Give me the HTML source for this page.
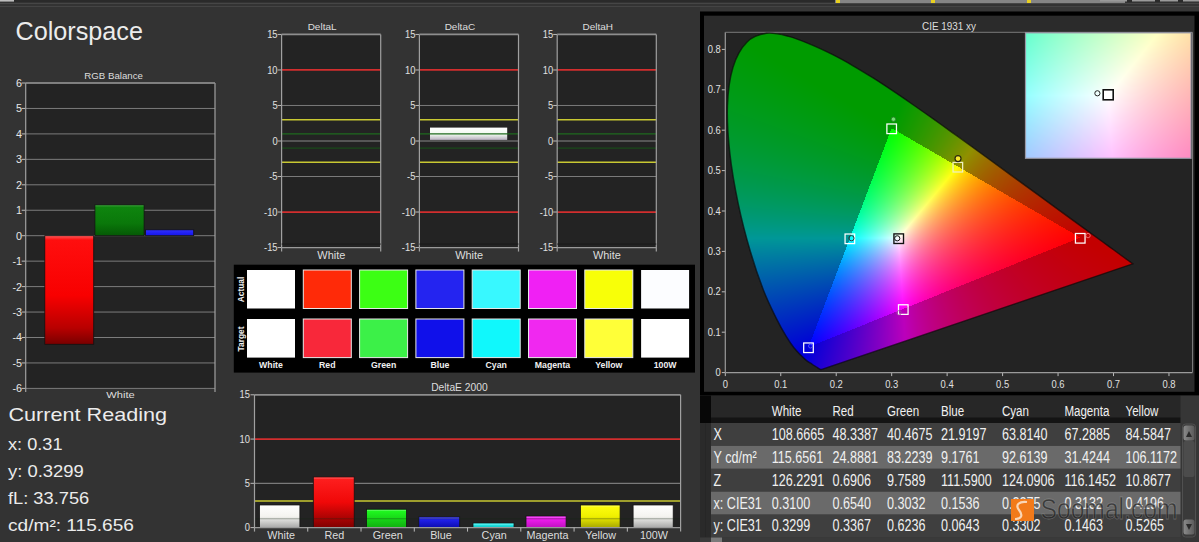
<!DOCTYPE html>
<html><head><meta charset="utf-8"><title>Colorspace</title>
<style>
html,body{margin:0;padding:0;background:#333333;}
body{width:1199px;height:542px;overflow:hidden;position:relative;font-family:"Liberation Sans",sans-serif;}
svg{position:absolute;left:0;top:0;}
svg text{font-family:"Liberation Sans",sans-serif;}
#cie{position:absolute;left:725px;top:32px;}
#ins{position:absolute;left:1026px;top:33px;}
</style></head><body>
<svg width="1199" height="542" viewBox="0 0 1199 542">
<rect x="0.00" y="0.00" width="1199.00" height="2.00" fill="#2a2a2a"/>
<rect x="0.00" y="0.00" width="14.00" height="1.60" fill="#bdbdbd"/>
<line x1="0.00" y1="3.50" x2="1199.00" y2="3.50" stroke="#464646" stroke-width="1"/>
<line x1="0.00" y1="6.50" x2="1199.00" y2="6.50" stroke="#444444" stroke-width="1"/>
<rect x="700.00" y="7.00" width="499.00" height="4.50" fill="#373737"/>
<rect x="835.00" y="0.00" width="290.00" height="3.00" fill="#858585"/>
<rect x="836.00" y="0.00" width="4.00" height="3.00" fill="#e8d020"/>
<rect x="931.00" y="0.00" width="4.00" height="3.00" fill="#e8d020"/>
<rect x="1027.00" y="0.00" width="4.00" height="3.00" fill="#e8d020"/>
<rect x="1100.00" y="0.00" width="27.00" height="1.50" fill="#9a9a9a"/>
<rect x="1132.00" y="0.00" width="23.00" height="1.50" fill="#9a9a9a"/>
<rect x="1160.00" y="0.00" width="18.00" height="1.50" fill="#9a9a9a"/>
<rect x="1183.00" y="0.00" width="16.00" height="1.50" fill="#9a9a9a"/>
<text x="15.50" y="39.50" font-size="25.70" fill="#ececec" text-anchor="start" textLength="127.50" lengthAdjust="spacingAndGlyphs">Colorspace</text>
<rect x="25.70" y="83.00" width="189.30" height="305.40" fill="#232323"/>
<text x="113.60" y="78.60" font-size="8.80" fill="#dddddd" text-anchor="middle" textLength="58.50" lengthAdjust="spacingAndGlyphs">RGB Balance</text>
<line x1="25.70" y1="83.00" x2="215.00" y2="83.00" stroke="#7c7c7c" stroke-width="1"/>
<line x1="21.70" y1="83.00" x2="25.70" y2="83.00" stroke="#bbbbbb" stroke-width="1"/>
<text x="22.00" y="86.90" font-size="10.80" fill="#e6e6e6" text-anchor="end" textLength="6.01" lengthAdjust="spacingAndGlyphs">6</text>
<line x1="25.70" y1="108.45" x2="215.00" y2="108.45" stroke="#7c7c7c" stroke-width="1"/>
<line x1="21.70" y1="108.45" x2="25.70" y2="108.45" stroke="#bbbbbb" stroke-width="1"/>
<text x="22.00" y="112.35" font-size="10.80" fill="#e6e6e6" text-anchor="end" textLength="6.01" lengthAdjust="spacingAndGlyphs">5</text>
<line x1="25.70" y1="133.90" x2="215.00" y2="133.90" stroke="#7c7c7c" stroke-width="1"/>
<line x1="21.70" y1="133.90" x2="25.70" y2="133.90" stroke="#bbbbbb" stroke-width="1"/>
<text x="22.00" y="137.80" font-size="10.80" fill="#e6e6e6" text-anchor="end" textLength="6.01" lengthAdjust="spacingAndGlyphs">4</text>
<line x1="25.70" y1="159.35" x2="215.00" y2="159.35" stroke="#7c7c7c" stroke-width="1"/>
<line x1="21.70" y1="159.35" x2="25.70" y2="159.35" stroke="#bbbbbb" stroke-width="1"/>
<text x="22.00" y="163.25" font-size="10.80" fill="#e6e6e6" text-anchor="end" textLength="6.01" lengthAdjust="spacingAndGlyphs">3</text>
<line x1="25.70" y1="184.80" x2="215.00" y2="184.80" stroke="#7c7c7c" stroke-width="1"/>
<line x1="21.70" y1="184.80" x2="25.70" y2="184.80" stroke="#bbbbbb" stroke-width="1"/>
<text x="22.00" y="188.70" font-size="10.80" fill="#e6e6e6" text-anchor="end" textLength="6.01" lengthAdjust="spacingAndGlyphs">2</text>
<line x1="25.70" y1="210.25" x2="215.00" y2="210.25" stroke="#7c7c7c" stroke-width="1"/>
<line x1="21.70" y1="210.25" x2="25.70" y2="210.25" stroke="#bbbbbb" stroke-width="1"/>
<text x="22.00" y="214.15" font-size="10.80" fill="#e6e6e6" text-anchor="end" textLength="6.01" lengthAdjust="spacingAndGlyphs">1</text>
<line x1="25.70" y1="235.70" x2="215.00" y2="235.70" stroke="#7c7c7c" stroke-width="1"/>
<line x1="21.70" y1="235.70" x2="25.70" y2="235.70" stroke="#bbbbbb" stroke-width="1"/>
<text x="22.00" y="239.60" font-size="10.80" fill="#e6e6e6" text-anchor="end" textLength="6.01" lengthAdjust="spacingAndGlyphs">0</text>
<line x1="25.70" y1="261.15" x2="215.00" y2="261.15" stroke="#7c7c7c" stroke-width="1"/>
<line x1="21.70" y1="261.15" x2="25.70" y2="261.15" stroke="#bbbbbb" stroke-width="1"/>
<text x="22.00" y="265.05" font-size="10.80" fill="#e6e6e6" text-anchor="end" textLength="9.60" lengthAdjust="spacingAndGlyphs">-1</text>
<line x1="25.70" y1="286.60" x2="215.00" y2="286.60" stroke="#7c7c7c" stroke-width="1"/>
<line x1="21.70" y1="286.60" x2="25.70" y2="286.60" stroke="#bbbbbb" stroke-width="1"/>
<text x="22.00" y="290.50" font-size="10.80" fill="#e6e6e6" text-anchor="end" textLength="9.60" lengthAdjust="spacingAndGlyphs">-2</text>
<line x1="25.70" y1="312.05" x2="215.00" y2="312.05" stroke="#7c7c7c" stroke-width="1"/>
<line x1="21.70" y1="312.05" x2="25.70" y2="312.05" stroke="#bbbbbb" stroke-width="1"/>
<text x="22.00" y="315.95" font-size="10.80" fill="#e6e6e6" text-anchor="end" textLength="9.60" lengthAdjust="spacingAndGlyphs">-3</text>
<line x1="25.70" y1="337.50" x2="215.00" y2="337.50" stroke="#7c7c7c" stroke-width="1"/>
<line x1="21.70" y1="337.50" x2="25.70" y2="337.50" stroke="#bbbbbb" stroke-width="1"/>
<text x="22.00" y="341.40" font-size="10.80" fill="#e6e6e6" text-anchor="end" textLength="9.60" lengthAdjust="spacingAndGlyphs">-4</text>
<line x1="25.70" y1="362.95" x2="215.00" y2="362.95" stroke="#7c7c7c" stroke-width="1"/>
<line x1="21.70" y1="362.95" x2="25.70" y2="362.95" stroke="#bbbbbb" stroke-width="1"/>
<text x="22.00" y="366.85" font-size="10.80" fill="#e6e6e6" text-anchor="end" textLength="9.60" lengthAdjust="spacingAndGlyphs">-5</text>
<line x1="25.70" y1="388.40" x2="215.00" y2="388.40" stroke="#7c7c7c" stroke-width="1"/>
<line x1="21.70" y1="388.40" x2="25.70" y2="388.40" stroke="#bbbbbb" stroke-width="1"/>
<text x="22.00" y="392.30" font-size="10.80" fill="#e6e6e6" text-anchor="end" textLength="9.60" lengthAdjust="spacingAndGlyphs">-6</text>
<defs><linearGradient id="gR" x1="0" y1="0" x2="0" y2="1"><stop offset="0" stop-color="#ff5a5a"/><stop offset="0.04" stop-color="#ff0e0e"/><stop offset="0.55" stop-color="#f80000"/><stop offset="0.85" stop-color="#b80000"/><stop offset="1" stop-color="#780000"/></linearGradient><linearGradient id="gG" x1="0" y1="0" x2="0" y2="1"><stop offset="0" stop-color="#40a840"/><stop offset="0.08" stop-color="#0e840e"/><stop offset="0.6" stop-color="#0a780a"/><stop offset="1" stop-color="#055805"/></linearGradient><linearGradient id="gB" x1="0" y1="0" x2="0" y2="1"><stop offset="0" stop-color="#3030ff"/><stop offset="1" stop-color="#1414e8"/></linearGradient></defs>
<rect x="44.80" y="235.70" width="48.90" height="108.60" fill="url(#gR)" stroke="#121212" stroke-width="0.8"/>
<rect x="94.90" y="204.80" width="49.20" height="30.90" fill="url(#gG)" stroke="#121212" stroke-width="0.8"/>
<rect x="145.60" y="229.80" width="48.10" height="5.90" fill="url(#gB)" stroke="#121212" stroke-width="0.8"/>
<line x1="25.70" y1="83.00" x2="25.70" y2="391.90" stroke="#a0a0a0" stroke-width="1.2"/>
<line x1="215.00" y1="83.00" x2="215.00" y2="391.90" stroke="#a0a0a0" stroke-width="1.2"/>
<line x1="25.70" y1="83.00" x2="215.00" y2="83.00" stroke="#8e8e8e" stroke-width="1.3"/>
<text x="120.50" y="397.90" font-size="9.60" fill="#dddddd" text-anchor="middle" textLength="28.50" lengthAdjust="spacingAndGlyphs">White</text>
<text x="8.50" y="421.00" font-size="18.60" fill="#ececec" text-anchor="start" textLength="158.50" lengthAdjust="spacingAndGlyphs">Current Reading</text>
<text x="8.00" y="449.80" font-size="16.40" fill="#ececec" text-anchor="start" textLength="54.50" lengthAdjust="spacingAndGlyphs">x: 0.31</text>
<text x="8.00" y="476.70" font-size="16.40" fill="#ececec" text-anchor="start" textLength="75.80" lengthAdjust="spacingAndGlyphs">y: 0.3299</text>
<text x="8.00" y="503.50" font-size="16.40" fill="#ececec" text-anchor="start" textLength="81.20" lengthAdjust="spacingAndGlyphs">fL: 33.756</text>
<text x="8.00" y="530.50" font-size="16.40" fill="#ececec" text-anchor="start" textLength="126.00" lengthAdjust="spacingAndGlyphs">cd/m²: 115.656</text>
<rect x="281.60" y="34.45" width="99.10" height="213.09" fill="#232323"/>
<text x="322.10" y="30.20" font-size="9.80" fill="#dddddd" text-anchor="middle" textLength="28.89" lengthAdjust="spacingAndGlyphs">DeltaL</text>
<text x="277.60" y="38.05" font-size="10.20" fill="#e0e0e0" text-anchor="end" textLength="10.44" lengthAdjust="spacingAndGlyphs">15</text>
<line x1="277.60" y1="34.45" x2="281.60" y2="34.45" stroke="#bbbbbb" stroke-width="1"/>
<text x="277.60" y="73.57" font-size="10.20" fill="#e0e0e0" text-anchor="end" textLength="10.44" lengthAdjust="spacingAndGlyphs">10</text>
<line x1="277.60" y1="69.97" x2="281.60" y2="69.97" stroke="#bbbbbb" stroke-width="1"/>
<text x="277.60" y="109.08" font-size="10.20" fill="#e0e0e0" text-anchor="end" textLength="5.22" lengthAdjust="spacingAndGlyphs">5</text>
<line x1="277.60" y1="105.48" x2="281.60" y2="105.48" stroke="#bbbbbb" stroke-width="1"/>
<text x="277.60" y="144.60" font-size="10.20" fill="#e0e0e0" text-anchor="end" textLength="5.22" lengthAdjust="spacingAndGlyphs">0</text>
<line x1="277.60" y1="141.00" x2="281.60" y2="141.00" stroke="#bbbbbb" stroke-width="1"/>
<text x="277.60" y="180.11" font-size="10.20" fill="#e0e0e0" text-anchor="end" textLength="8.34" lengthAdjust="spacingAndGlyphs">-5</text>
<line x1="277.60" y1="176.51" x2="281.60" y2="176.51" stroke="#bbbbbb" stroke-width="1"/>
<text x="277.60" y="215.63" font-size="10.20" fill="#e0e0e0" text-anchor="end" textLength="13.56" lengthAdjust="spacingAndGlyphs">-10</text>
<line x1="277.60" y1="212.03" x2="281.60" y2="212.03" stroke="#bbbbbb" stroke-width="1"/>
<text x="277.60" y="251.15" font-size="10.20" fill="#e0e0e0" text-anchor="end" textLength="13.56" lengthAdjust="spacingAndGlyphs">-15</text>
<line x1="277.60" y1="247.55" x2="281.60" y2="247.55" stroke="#bbbbbb" stroke-width="1"/>
<line x1="281.60" y1="69.97" x2="380.70" y2="69.97" stroke="#d22e2e" stroke-width="1.8"/>
<line x1="281.60" y1="212.03" x2="380.70" y2="212.03" stroke="#d22e2e" stroke-width="1.8"/>
<line x1="281.60" y1="105.48" x2="380.70" y2="105.48" stroke="#7a7a7a" stroke-width="1"/>
<line x1="281.60" y1="176.51" x2="380.70" y2="176.51" stroke="#7a7a7a" stroke-width="1"/>
<line x1="281.60" y1="119.69" x2="380.70" y2="119.69" stroke="#c8c832" stroke-width="1.6"/>
<line x1="281.60" y1="162.31" x2="380.70" y2="162.31" stroke="#c8c832" stroke-width="1.6"/>
<line x1="281.60" y1="133.90" x2="380.70" y2="133.90" stroke="#1f6a1f" stroke-width="1.2"/>
<line x1="281.60" y1="148.10" x2="380.70" y2="148.10" stroke="#1a4a1a" stroke-width="1.2"/>
<line x1="281.60" y1="141.00" x2="380.70" y2="141.00" stroke="#8a8a8a" stroke-width="1.2"/>
<line x1="281.60" y1="34.45" x2="380.70" y2="34.45" stroke="#8e8e8e" stroke-width="1.8"/>
<line x1="281.60" y1="34.45" x2="281.60" y2="251.55" stroke="#a0a0a0" stroke-width="1.2"/>
<line x1="380.70" y1="34.45" x2="380.70" y2="251.55" stroke="#a0a0a0" stroke-width="1.2"/>
<line x1="281.60" y1="244.05" x2="380.70" y2="244.05" stroke="#1a1a1a" stroke-width="1"/>
<line x1="281.60" y1="247.55" x2="380.70" y2="247.55" stroke="#9a9a9a" stroke-width="1.2"/>
<text x="331.35" y="258.50" font-size="10.60" fill="#dddddd" text-anchor="middle" textLength="28.00" lengthAdjust="spacingAndGlyphs">White</text>
<rect x="419.40" y="34.45" width="99.10" height="213.09" fill="#232323"/>
<text x="459.90" y="30.20" font-size="9.80" fill="#dddddd" text-anchor="middle" textLength="30.55" lengthAdjust="spacingAndGlyphs">DeltaC</text>
<text x="415.40" y="38.05" font-size="10.20" fill="#e0e0e0" text-anchor="end" textLength="10.44" lengthAdjust="spacingAndGlyphs">15</text>
<line x1="415.40" y1="34.45" x2="419.40" y2="34.45" stroke="#bbbbbb" stroke-width="1"/>
<text x="415.40" y="73.57" font-size="10.20" fill="#e0e0e0" text-anchor="end" textLength="10.44" lengthAdjust="spacingAndGlyphs">10</text>
<line x1="415.40" y1="69.97" x2="419.40" y2="69.97" stroke="#bbbbbb" stroke-width="1"/>
<text x="415.40" y="109.08" font-size="10.20" fill="#e0e0e0" text-anchor="end" textLength="5.22" lengthAdjust="spacingAndGlyphs">5</text>
<line x1="415.40" y1="105.48" x2="419.40" y2="105.48" stroke="#bbbbbb" stroke-width="1"/>
<text x="415.40" y="144.60" font-size="10.20" fill="#e0e0e0" text-anchor="end" textLength="5.22" lengthAdjust="spacingAndGlyphs">0</text>
<line x1="415.40" y1="141.00" x2="419.40" y2="141.00" stroke="#bbbbbb" stroke-width="1"/>
<text x="415.40" y="180.11" font-size="10.20" fill="#e0e0e0" text-anchor="end" textLength="8.34" lengthAdjust="spacingAndGlyphs">-5</text>
<line x1="415.40" y1="176.51" x2="419.40" y2="176.51" stroke="#bbbbbb" stroke-width="1"/>
<text x="415.40" y="215.63" font-size="10.20" fill="#e0e0e0" text-anchor="end" textLength="13.56" lengthAdjust="spacingAndGlyphs">-10</text>
<line x1="415.40" y1="212.03" x2="419.40" y2="212.03" stroke="#bbbbbb" stroke-width="1"/>
<text x="415.40" y="251.15" font-size="10.20" fill="#e0e0e0" text-anchor="end" textLength="13.56" lengthAdjust="spacingAndGlyphs">-15</text>
<line x1="415.40" y1="247.55" x2="419.40" y2="247.55" stroke="#bbbbbb" stroke-width="1"/>
<defs><linearGradient id="gW" x1="0" y1="0" x2="0" y2="1"><stop offset="0" stop-color="#ffffff"/><stop offset="0.55" stop-color="#f0f8f0"/><stop offset="1" stop-color="#b8b0c0"/></linearGradient></defs>
<rect x="430.00" y="127.60" width="77.20" height="12.30" fill="url(#gW)"/>
<line x1="419.40" y1="69.97" x2="518.50" y2="69.97" stroke="#d22e2e" stroke-width="1.8"/>
<line x1="419.40" y1="212.03" x2="518.50" y2="212.03" stroke="#d22e2e" stroke-width="1.8"/>
<line x1="419.40" y1="105.48" x2="518.50" y2="105.48" stroke="#7a7a7a" stroke-width="1"/>
<line x1="419.40" y1="176.51" x2="518.50" y2="176.51" stroke="#7a7a7a" stroke-width="1"/>
<line x1="419.40" y1="119.69" x2="518.50" y2="119.69" stroke="#c8c832" stroke-width="1.6"/>
<line x1="419.40" y1="162.31" x2="518.50" y2="162.31" stroke="#c8c832" stroke-width="1.6"/>
<line x1="419.40" y1="133.90" x2="518.50" y2="133.90" stroke="#1f6a1f" stroke-width="1.2"/>
<line x1="419.40" y1="148.10" x2="518.50" y2="148.10" stroke="#1a4a1a" stroke-width="1.2"/>
<line x1="419.40" y1="141.00" x2="518.50" y2="141.00" stroke="#8a8a8a" stroke-width="1.2"/>
<line x1="419.40" y1="34.45" x2="518.50" y2="34.45" stroke="#8e8e8e" stroke-width="1.8"/>
<line x1="419.40" y1="34.45" x2="419.40" y2="251.55" stroke="#a0a0a0" stroke-width="1.2"/>
<line x1="518.50" y1="34.45" x2="518.50" y2="251.55" stroke="#a0a0a0" stroke-width="1.2"/>
<line x1="419.40" y1="244.05" x2="518.50" y2="244.05" stroke="#1a1a1a" stroke-width="1"/>
<line x1="419.40" y1="247.55" x2="518.50" y2="247.55" stroke="#9a9a9a" stroke-width="1.2"/>
<text x="469.15" y="258.50" font-size="10.60" fill="#dddddd" text-anchor="middle" textLength="28.00" lengthAdjust="spacingAndGlyphs">White</text>
<rect x="557.20" y="34.45" width="99.10" height="213.09" fill="#232323"/>
<text x="597.70" y="30.20" font-size="9.80" fill="#dddddd" text-anchor="middle" textLength="30.55" lengthAdjust="spacingAndGlyphs">DeltaH</text>
<text x="553.20" y="38.05" font-size="10.20" fill="#e0e0e0" text-anchor="end" textLength="10.44" lengthAdjust="spacingAndGlyphs">15</text>
<line x1="553.20" y1="34.45" x2="557.20" y2="34.45" stroke="#bbbbbb" stroke-width="1"/>
<text x="553.20" y="73.57" font-size="10.20" fill="#e0e0e0" text-anchor="end" textLength="10.44" lengthAdjust="spacingAndGlyphs">10</text>
<line x1="553.20" y1="69.97" x2="557.20" y2="69.97" stroke="#bbbbbb" stroke-width="1"/>
<text x="553.20" y="109.08" font-size="10.20" fill="#e0e0e0" text-anchor="end" textLength="5.22" lengthAdjust="spacingAndGlyphs">5</text>
<line x1="553.20" y1="105.48" x2="557.20" y2="105.48" stroke="#bbbbbb" stroke-width="1"/>
<text x="553.20" y="144.60" font-size="10.20" fill="#e0e0e0" text-anchor="end" textLength="5.22" lengthAdjust="spacingAndGlyphs">0</text>
<line x1="553.20" y1="141.00" x2="557.20" y2="141.00" stroke="#bbbbbb" stroke-width="1"/>
<text x="553.20" y="180.11" font-size="10.20" fill="#e0e0e0" text-anchor="end" textLength="8.34" lengthAdjust="spacingAndGlyphs">-5</text>
<line x1="553.20" y1="176.51" x2="557.20" y2="176.51" stroke="#bbbbbb" stroke-width="1"/>
<text x="553.20" y="215.63" font-size="10.20" fill="#e0e0e0" text-anchor="end" textLength="13.56" lengthAdjust="spacingAndGlyphs">-10</text>
<line x1="553.20" y1="212.03" x2="557.20" y2="212.03" stroke="#bbbbbb" stroke-width="1"/>
<text x="553.20" y="251.15" font-size="10.20" fill="#e0e0e0" text-anchor="end" textLength="13.56" lengthAdjust="spacingAndGlyphs">-15</text>
<line x1="553.20" y1="247.55" x2="557.20" y2="247.55" stroke="#bbbbbb" stroke-width="1"/>
<line x1="557.20" y1="69.97" x2="656.30" y2="69.97" stroke="#d22e2e" stroke-width="1.8"/>
<line x1="557.20" y1="212.03" x2="656.30" y2="212.03" stroke="#d22e2e" stroke-width="1.8"/>
<line x1="557.20" y1="105.48" x2="656.30" y2="105.48" stroke="#7a7a7a" stroke-width="1"/>
<line x1="557.20" y1="176.51" x2="656.30" y2="176.51" stroke="#7a7a7a" stroke-width="1"/>
<line x1="557.20" y1="119.69" x2="656.30" y2="119.69" stroke="#c8c832" stroke-width="1.6"/>
<line x1="557.20" y1="162.31" x2="656.30" y2="162.31" stroke="#c8c832" stroke-width="1.6"/>
<line x1="557.20" y1="133.90" x2="656.30" y2="133.90" stroke="#1f6a1f" stroke-width="1.2"/>
<line x1="557.20" y1="148.10" x2="656.30" y2="148.10" stroke="#1a4a1a" stroke-width="1.2"/>
<line x1="557.20" y1="141.00" x2="656.30" y2="141.00" stroke="#8a8a8a" stroke-width="1.2"/>
<line x1="557.20" y1="34.45" x2="656.30" y2="34.45" stroke="#8e8e8e" stroke-width="1.8"/>
<line x1="557.20" y1="34.45" x2="557.20" y2="251.55" stroke="#a0a0a0" stroke-width="1.2"/>
<line x1="656.30" y1="34.45" x2="656.30" y2="251.55" stroke="#a0a0a0" stroke-width="1.2"/>
<line x1="557.20" y1="244.05" x2="656.30" y2="244.05" stroke="#1a1a1a" stroke-width="1"/>
<line x1="557.20" y1="247.55" x2="656.30" y2="247.55" stroke="#9a9a9a" stroke-width="1.2"/>
<text x="606.95" y="258.50" font-size="10.60" fill="#dddddd" text-anchor="middle" textLength="28.00" lengthAdjust="spacingAndGlyphs">White</text>
<rect x="233.80" y="264.70" width="461.20" height="107.90" fill="#000000"/>
<rect x="247.00" y="270.00" width="48.00" height="38.50" fill="#ffffff"/>
<rect x="247.00" y="319.00" width="48.00" height="38.60" fill="#ffffff"/>
<text x="271.00" y="367.60" font-size="9.20" fill="#f0f0f0" text-anchor="middle" textLength="23.79" lengthAdjust="spacingAndGlyphs" font-weight="bold">White</text>
<rect x="303.30" y="270.00" width="48.00" height="38.50" fill="#ff2a08" stroke="#e8e8e8" stroke-width="1"/>
<rect x="303.30" y="319.00" width="48.00" height="38.60" fill="#f8283a" stroke="#e8e8e8" stroke-width="1"/>
<text x="327.30" y="367.60" font-size="9.20" fill="#f0f0f0" text-anchor="middle" textLength="16.51" lengthAdjust="spacingAndGlyphs" font-weight="bold">Red</text>
<rect x="359.60" y="270.00" width="48.00" height="38.50" fill="#3cff14" stroke="#e8e8e8" stroke-width="1"/>
<rect x="359.60" y="319.00" width="48.00" height="38.60" fill="#3cf048" stroke="#e8e8e8" stroke-width="1"/>
<text x="383.60" y="367.60" font-size="9.20" fill="#f0f0f0" text-anchor="middle" textLength="25.26" lengthAdjust="spacingAndGlyphs" font-weight="bold">Green</text>
<rect x="415.90" y="270.00" width="48.00" height="38.50" fill="#2424f0" stroke="#e8e8e8" stroke-width="1"/>
<rect x="415.90" y="319.00" width="48.00" height="38.60" fill="#1010ea" stroke="#e8e8e8" stroke-width="1"/>
<text x="439.90" y="367.60" font-size="9.20" fill="#f0f0f0" text-anchor="middle" textLength="18.94" lengthAdjust="spacingAndGlyphs" font-weight="bold">Blue</text>
<rect x="472.20" y="270.00" width="48.00" height="38.50" fill="#38f8ff" stroke="#e8e8e8" stroke-width="1"/>
<rect x="472.20" y="319.00" width="48.00" height="38.60" fill="#10f8fc" stroke="#e8e8e8" stroke-width="1"/>
<text x="496.20" y="367.60" font-size="9.20" fill="#f0f0f0" text-anchor="middle" textLength="21.37" lengthAdjust="spacingAndGlyphs" font-weight="bold">Cyan</text>
<rect x="528.50" y="270.00" width="48.00" height="38.50" fill="#f020f4" stroke="#e8e8e8" stroke-width="1"/>
<rect x="528.50" y="319.00" width="48.00" height="38.60" fill="#f028f0" stroke="#e8e8e8" stroke-width="1"/>
<text x="552.50" y="367.60" font-size="9.20" fill="#f0f0f0" text-anchor="middle" textLength="35.45" lengthAdjust="spacingAndGlyphs" font-weight="bold">Magenta</text>
<rect x="584.80" y="270.00" width="48.00" height="38.50" fill="#f8ff08" stroke="#e8e8e8" stroke-width="1"/>
<rect x="584.80" y="319.00" width="48.00" height="38.60" fill="#ffff38" stroke="#e8e8e8" stroke-width="1"/>
<text x="608.80" y="367.60" font-size="9.20" fill="#f0f0f0" text-anchor="middle" textLength="27.20" lengthAdjust="spacingAndGlyphs" font-weight="bold">Yellow</text>
<rect x="641.10" y="270.00" width="48.00" height="38.50" fill="#fcfdff"/>
<rect x="641.10" y="319.00" width="48.00" height="38.60" fill="#ffffff"/>
<text x="665.10" y="367.60" font-size="9.20" fill="#f0f0f0" text-anchor="middle" textLength="22.83" lengthAdjust="spacingAndGlyphs" font-weight="bold">100W</text>
<text transform="translate(243.6,289.5) rotate(-90)" font-size="8.4" font-weight="bold" fill="#f0f0f0" text-anchor="middle">Actual</text>
<text transform="translate(243.6,339) rotate(-90)" font-size="8.4" font-weight="bold" fill="#f0f0f0" text-anchor="middle">Target</text>
<rect x="254.50" y="394.81" width="426.10" height="132.79" fill="#232323"/>
<text x="459.40" y="391.00" font-size="10.60" fill="#dddddd" text-anchor="middle" textLength="56.50" lengthAdjust="spacingAndGlyphs">DeltaE 2000</text>
<text x="250.00" y="398.41" font-size="10.20" fill="#e0e0e0" text-anchor="end" textLength="10.44" lengthAdjust="spacingAndGlyphs">15</text>
<line x1="250.50" y1="394.81" x2="254.50" y2="394.81" stroke="#bbbbbb" stroke-width="1"/>
<text x="250.00" y="442.67" font-size="10.20" fill="#e0e0e0" text-anchor="end" textLength="10.44" lengthAdjust="spacingAndGlyphs">10</text>
<line x1="250.50" y1="439.07" x2="254.50" y2="439.07" stroke="#bbbbbb" stroke-width="1"/>
<text x="250.00" y="486.94" font-size="10.20" fill="#e0e0e0" text-anchor="end" textLength="5.22" lengthAdjust="spacingAndGlyphs">5</text>
<line x1="250.50" y1="483.34" x2="254.50" y2="483.34" stroke="#bbbbbb" stroke-width="1"/>
<text x="250.00" y="531.20" font-size="10.20" fill="#e0e0e0" text-anchor="end" textLength="5.22" lengthAdjust="spacingAndGlyphs">0</text>
<line x1="250.50" y1="527.60" x2="254.50" y2="527.60" stroke="#bbbbbb" stroke-width="1"/>
<defs><linearGradient id="eW" x1="0" y1="0" x2="0" y2="1"><stop offset="0" stop-color="#ffffff"/><stop offset="0.5" stop-color="#f4f4f0"/><stop offset="1" stop-color="#a8a8a8"/></linearGradient><linearGradient id="eR" x1="0" y1="0" x2="0" y2="1"><stop offset="0" stop-color="#ff2020"/><stop offset="0.5" stop-color="#f00808"/><stop offset="1" stop-color="#800000"/></linearGradient><linearGradient id="eG" x1="0" y1="0" x2="0" y2="1"><stop offset="0" stop-color="#20ff20"/><stop offset="1" stop-color="#10b010"/></linearGradient><linearGradient id="eB" x1="0" y1="0" x2="0" y2="1"><stop offset="0" stop-color="#2828ff"/><stop offset="1" stop-color="#0c0cb0"/></linearGradient><linearGradient id="eC" x1="0" y1="0" x2="0" y2="1"><stop offset="0" stop-color="#30ffff"/><stop offset="1" stop-color="#10c0c0"/></linearGradient><linearGradient id="eM" x1="0" y1="0" x2="0" y2="1"><stop offset="0" stop-color="#ff20ff"/><stop offset="1" stop-color="#c010c0"/></linearGradient><linearGradient id="eY" x1="0" y1="0" x2="0" y2="1"><stop offset="0" stop-color="#ffff10"/><stop offset="0.5" stop-color="#f0f000"/><stop offset="1" stop-color="#a8a800"/></linearGradient></defs>
<line x1="254.50" y1="439.07" x2="680.60" y2="439.07" stroke="#d22e2e" stroke-width="1.8"/>
<line x1="254.50" y1="483.34" x2="680.60" y2="483.34" stroke="#7a7a7a" stroke-width="1.2"/>
<line x1="254.50" y1="501.04" x2="680.60" y2="501.04" stroke="#c8c832" stroke-width="1.6"/>
<rect x="259.50" y="505.00" width="40.40" height="22.60" fill="url(#eW)" stroke="#141414" stroke-width="0.8"/>
<line x1="260.00" y1="506.20" x2="299.40" y2="506.20" stroke="rgba(255,255,255,0.25)" stroke-width="1"/>
<rect x="313.30" y="476.90" width="40.90" height="50.70" fill="url(#eR)" stroke="#141414" stroke-width="0.8"/>
<line x1="313.80" y1="478.10" x2="353.70" y2="478.10" stroke="rgba(255,255,255,0.25)" stroke-width="1"/>
<rect x="366.50" y="509.20" width="40.00" height="18.40" fill="url(#eG)" stroke="#141414" stroke-width="0.8"/>
<line x1="367.00" y1="510.40" x2="406.00" y2="510.40" stroke="rgba(255,255,255,0.25)" stroke-width="1"/>
<rect x="418.80" y="516.90" width="40.90" height="10.70" fill="url(#eB)" stroke="#141414" stroke-width="0.8"/>
<line x1="419.30" y1="518.10" x2="459.20" y2="518.10" stroke="rgba(255,255,255,0.25)" stroke-width="1"/>
<rect x="473.00" y="523.00" width="41.00" height="4.60" fill="url(#eC)" stroke="#141414" stroke-width="0.8"/>
<line x1="473.50" y1="524.20" x2="513.50" y2="524.20" stroke="rgba(255,255,255,0.25)" stroke-width="1"/>
<rect x="526.00" y="516.00" width="40.10" height="11.60" fill="url(#eM)" stroke="#141414" stroke-width="0.8"/>
<line x1="526.50" y1="517.20" x2="565.60" y2="517.20" stroke="rgba(255,255,255,0.25)" stroke-width="1"/>
<rect x="580.40" y="505.00" width="39.70" height="22.60" fill="url(#eY)" stroke="#141414" stroke-width="0.8"/>
<line x1="580.90" y1="506.20" x2="619.60" y2="506.20" stroke="rgba(255,255,255,0.25)" stroke-width="1"/>
<rect x="633.10" y="505.00" width="40.10" height="22.60" fill="url(#eW)" stroke="#141414" stroke-width="0.8"/>
<line x1="633.60" y1="506.20" x2="672.70" y2="506.20" stroke="rgba(255,255,255,0.25)" stroke-width="1"/>
<line x1="254.50" y1="518.75" x2="680.60" y2="518.75" stroke="rgba(20,40,20,0.35)" stroke-width="1"/>
<line x1="254.50" y1="394.81" x2="680.60" y2="394.81" stroke="#8e8e8e" stroke-width="1.8"/>
<line x1="254.50" y1="394.81" x2="254.50" y2="531.60" stroke="#a0a0a0" stroke-width="1.2"/>
<line x1="680.60" y1="394.81" x2="680.60" y2="531.60" stroke="#a0a0a0" stroke-width="1.2"/>
<line x1="254.50" y1="527.60" x2="680.60" y2="527.60" stroke="#9a9a9a" stroke-width="1.2"/>
<text x="281.13" y="538.90" font-size="11.00" fill="#dddddd" text-anchor="middle" textLength="27.56" lengthAdjust="spacingAndGlyphs">White</text>
<text x="334.39" y="538.90" font-size="11.00" fill="#dddddd" text-anchor="middle" textLength="19.78" lengthAdjust="spacingAndGlyphs">Red</text>
<line x1="307.76" y1="527.60" x2="307.76" y2="531.60" stroke="#bbbbbb" stroke-width="1"/>
<text x="387.66" y="538.90" font-size="11.00" fill="#dddddd" text-anchor="middle" textLength="29.96" lengthAdjust="spacingAndGlyphs">Green</text>
<line x1="361.02" y1="527.60" x2="361.02" y2="531.60" stroke="#bbbbbb" stroke-width="1"/>
<text x="440.92" y="538.90" font-size="11.00" fill="#dddddd" text-anchor="middle" textLength="21.58" lengthAdjust="spacingAndGlyphs">Blue</text>
<line x1="414.29" y1="527.60" x2="414.29" y2="531.60" stroke="#bbbbbb" stroke-width="1"/>
<text x="494.18" y="538.90" font-size="11.00" fill="#dddddd" text-anchor="middle" textLength="25.17" lengthAdjust="spacingAndGlyphs">Cyan</text>
<line x1="467.55" y1="527.60" x2="467.55" y2="531.60" stroke="#bbbbbb" stroke-width="1"/>
<text x="547.44" y="538.90" font-size="11.00" fill="#dddddd" text-anchor="middle" textLength="41.95" lengthAdjust="spacingAndGlyphs">Magenta</text>
<line x1="520.81" y1="527.60" x2="520.81" y2="531.60" stroke="#bbbbbb" stroke-width="1"/>
<text x="600.71" y="538.90" font-size="11.00" fill="#dddddd" text-anchor="middle" textLength="30.77" lengthAdjust="spacingAndGlyphs">Yellow</text>
<line x1="574.08" y1="527.60" x2="574.08" y2="531.60" stroke="#bbbbbb" stroke-width="1"/>
<text x="653.97" y="538.90" font-size="11.00" fill="#dddddd" text-anchor="middle" textLength="28.16" lengthAdjust="spacingAndGlyphs">100W</text>
<line x1="627.34" y1="527.60" x2="627.34" y2="531.60" stroke="#bbbbbb" stroke-width="1"/>
<rect x="700.00" y="11.50" width="499.00" height="384.10" fill="#000000"/>
<rect x="704.00" y="15.70" width="490.50" height="376.10" fill="#2b2b2b"/>
<rect x="725.30" y="32.30" width="467.20" height="340.30" fill="#232323"/>
<text x="949.00" y="30.00" font-size="10.60" fill="#dddddd" text-anchor="middle" textLength="54.00" lengthAdjust="spacingAndGlyphs">CIE 1931 xy</text>
<defs><clipPath id="lcp"><path d="M821.9 369.4 C821.8 369.4 821.8 369.4 821.7 369.4 C821.6 369.4 821.5 369.4 821.4 369.5 C821.3 369.5 821.2 369.5 821.0 369.5 C820.8 369.4 820.7 369.5 820.4 369.3 C820.0 369.2 819.6 369.0 819.0 368.6 C818.3 368.2 817.6 367.7 816.5 367.0 C815.3 366.3 814.0 365.5 812.2 364.2 C810.3 363.0 808.2 362.1 805.2 359.4 C802.2 356.6 797.3 351.8 794.1 348.0 C790.9 344.1 789.1 341.3 786.1 336.2 C783.1 331.1 779.7 325.3 775.9 317.6 C772.2 309.9 767.6 301.0 763.4 290.0 C759.2 279.0 754.7 266.1 750.5 251.8 C746.3 237.4 741.8 220.5 738.3 204.1 C734.9 187.6 731.7 169.4 729.8 153.1 C728.0 136.7 726.9 120.2 727.5 105.9 C728.0 91.6 729.8 77.8 733.0 67.2 C736.2 56.6 741.3 47.8 746.9 42.1 C752.5 36.5 759.5 34.3 766.5 33.3 C773.5 32.3 781.2 34.5 788.6 36.4 C796.1 38.3 803.8 41.6 811.1 44.6 C818.4 47.6 825.4 51.0 832.3 54.5 C839.2 57.9 845.9 61.7 852.6 65.5 C859.4 69.4 866.1 73.5 872.7 77.7 C879.4 81.9 886.0 86.3 892.6 90.7 C899.2 95.1 905.8 99.6 912.4 104.2 C919.0 108.8 925.6 113.5 932.2 118.2 C938.8 122.8 945.4 127.6 952.0 132.3 C958.5 137.0 965.1 141.8 971.6 146.5 C978.1 151.2 984.5 155.9 990.8 160.5 C997.2 165.1 1003.4 169.6 1009.5 174.1 C1015.6 178.5 1021.7 182.9 1027.4 187.1 C1033.2 191.4 1038.9 195.5 1044.3 199.4 C1049.7 203.3 1054.9 207.1 1059.7 210.6 C1064.5 214.1 1068.8 217.3 1073.0 220.4 C1077.2 223.4 1081.2 226.3 1084.8 228.9 C1088.4 231.5 1091.6 233.8 1094.6 236.0 C1097.5 238.1 1100.1 240.0 1102.5 241.8 C1104.9 243.5 1106.9 245.0 1108.8 246.4 C1110.7 247.8 1112.3 248.9 1113.9 250.0 C1115.4 251.1 1116.7 252.1 1117.9 253.0 C1119.1 253.9 1120.3 254.7 1121.3 255.5 C1122.3 256.2 1123.2 256.9 1124.1 257.5 C1124.9 258.1 1125.6 258.6 1126.3 259.1 C1126.9 259.5 1127.4 259.9 1127.9 260.3 C1128.4 260.7 1128.8 261.0 1129.2 261.2 C1129.6 261.5 1129.9 261.7 1130.2 261.9 C1130.4 262.1 1130.6 262.2 1130.8 262.4 C1131.0 262.5 1131.1 262.6 1131.3 262.7 C1131.5 262.9 1131.8 263.1 1132.0 263.3 C1132.3 263.5 1132.6 263.7 1132.8 263.8Z"/></clipPath><filter id="fb" x="-5%" y="-5%" width="110%" height="110%"><feGaussianBlur stdDeviation="4"/></filter></defs><g clip-path="url(#lcp)"><g filter="url(#fb)"><rect x="725" y="32" width="12" height="12" fill="#009b01"/><rect x="737" y="32" width="12" height="12" fill="#009b00"/><rect x="749" y="32" width="12" height="12" fill="#009b00"/><rect x="761" y="32" width="12" height="12" fill="#009b00"/><rect x="773" y="32" width="12" height="12" fill="#009b00"/><rect x="785" y="32" width="12" height="12" fill="#009b00"/><rect x="797" y="32" width="12" height="12" fill="#009b00"/><rect x="809" y="32" width="12" height="12" fill="#009b00"/><rect x="821" y="32" width="12" height="12" fill="#009b00"/><rect x="833" y="32" width="12" height="12" fill="#009b00"/><rect x="845" y="32" width="12" height="12" fill="#009b00"/><rect x="725" y="44" width="12" height="12" fill="#009b04"/><rect x="737" y="44" width="12" height="12" fill="#009b02"/><rect x="749" y="44" width="12" height="12" fill="#009b00"/><rect x="761" y="44" width="12" height="12" fill="#009b00"/><rect x="773" y="44" width="12" height="12" fill="#009b00"/><rect x="785" y="44" width="12" height="12" fill="#009b00"/><rect x="797" y="44" width="12" height="12" fill="#009b00"/><rect x="809" y="44" width="12" height="12" fill="#009b00"/><rect x="821" y="44" width="12" height="12" fill="#009b00"/><rect x="833" y="44" width="12" height="12" fill="#009b00"/><rect x="845" y="44" width="12" height="12" fill="#009b00"/><rect x="857" y="44" width="12" height="12" fill="#009b00"/><rect x="725" y="56" width="12" height="12" fill="#009b09"/><rect x="737" y="56" width="12" height="12" fill="#009b06"/><rect x="749" y="56" width="12" height="12" fill="#009b04"/><rect x="761" y="56" width="12" height="12" fill="#009b02"/><rect x="773" y="56" width="12" height="12" fill="#009b00"/><rect x="785" y="56" width="12" height="12" fill="#009b00"/><rect x="797" y="56" width="12" height="12" fill="#009b00"/><rect x="809" y="56" width="12" height="12" fill="#009b00"/><rect x="821" y="56" width="12" height="12" fill="#009b00"/><rect x="833" y="56" width="12" height="12" fill="#009b00"/><rect x="845" y="56" width="12" height="12" fill="#009b00"/><rect x="857" y="56" width="12" height="12" fill="#009b00"/><rect x="869" y="56" width="12" height="12" fill="#009b00"/><rect x="881" y="56" width="12" height="12" fill="#009b00"/><rect x="725" y="68" width="12" height="12" fill="#009a0d"/><rect x="737" y="68" width="12" height="12" fill="#009b0b"/><rect x="749" y="68" width="12" height="12" fill="#009b09"/><rect x="761" y="68" width="12" height="12" fill="#009b06"/><rect x="773" y="68" width="12" height="12" fill="#009b04"/><rect x="785" y="68" width="12" height="12" fill="#009b01"/><rect x="797" y="68" width="12" height="12" fill="#009b00"/><rect x="809" y="68" width="12" height="12" fill="#009b00"/><rect x="821" y="68" width="12" height="12" fill="#009b00"/><rect x="833" y="68" width="12" height="12" fill="#009b00"/><rect x="845" y="68" width="12" height="12" fill="#009b00"/><rect x="857" y="68" width="12" height="12" fill="#009b00"/><rect x="869" y="68" width="12" height="12" fill="#009b00"/><rect x="881" y="68" width="12" height="12" fill="#009b00"/><rect x="893" y="68" width="12" height="12" fill="#009b00"/><rect x="725" y="80" width="12" height="12" fill="#009a12"/><rect x="737" y="80" width="12" height="12" fill="#009a10"/><rect x="749" y="80" width="12" height="12" fill="#009a0e"/><rect x="761" y="80" width="12" height="12" fill="#009b0b"/><rect x="773" y="80" width="12" height="12" fill="#009b09"/><rect x="785" y="80" width="12" height="12" fill="#009b06"/><rect x="797" y="80" width="12" height="12" fill="#009b03"/><rect x="809" y="80" width="12" height="12" fill="#009b01"/><rect x="821" y="80" width="12" height="12" fill="#009b00"/><rect x="833" y="80" width="12" height="12" fill="#009b00"/><rect x="845" y="80" width="12" height="12" fill="#009b00"/><rect x="857" y="80" width="12" height="12" fill="#009b00"/><rect x="869" y="80" width="12" height="12" fill="#009b00"/><rect x="881" y="80" width="12" height="12" fill="#009b00"/><rect x="893" y="80" width="12" height="12" fill="#009b00"/><rect x="905" y="80" width="12" height="12" fill="#039b00"/><rect x="725" y="92" width="12" height="12" fill="#009a17"/><rect x="737" y="92" width="12" height="12" fill="#009a15"/><rect x="749" y="92" width="12" height="12" fill="#009a13"/><rect x="761" y="92" width="12" height="12" fill="#009a10"/><rect x="773" y="92" width="12" height="12" fill="#009a0e"/><rect x="785" y="92" width="12" height="12" fill="#009a0b"/><rect x="797" y="92" width="12" height="12" fill="#009b09"/><rect x="809" y="92" width="12" height="12" fill="#009b06"/><rect x="821" y="92" width="12" height="12" fill="#009b03"/><rect x="833" y="92" width="12" height="12" fill="#009b00"/><rect x="845" y="92" width="12" height="12" fill="#009b00"/><rect x="857" y="92" width="12" height="12" fill="#009b00"/><rect x="869" y="92" width="12" height="12" fill="#009b00"/><rect x="881" y="92" width="12" height="12" fill="#009b00"/><rect x="893" y="92" width="12" height="12" fill="#009b00"/><rect x="905" y="92" width="12" height="12" fill="#089a00"/><rect x="917" y="92" width="12" height="12" fill="#169900"/><rect x="929" y="92" width="12" height="12" fill="#249800"/><rect x="725" y="104" width="12" height="12" fill="#009a1d"/><rect x="737" y="104" width="12" height="12" fill="#009a1b"/><rect x="749" y="104" width="12" height="12" fill="#009a19"/><rect x="761" y="104" width="12" height="12" fill="#009a16"/><rect x="773" y="104" width="12" height="12" fill="#009a14"/><rect x="785" y="104" width="12" height="12" fill="#009a11"/><rect x="797" y="104" width="12" height="12" fill="#009a0e"/><rect x="809" y="104" width="12" height="12" fill="#009a0c"/><rect x="821" y="104" width="12" height="12" fill="#009b09"/><rect x="833" y="104" width="12" height="12" fill="#009b05"/><rect x="845" y="104" width="12" height="12" fill="#009b02"/><rect x="857" y="104" width="12" height="12" fill="#009b00"/><rect x="869" y="104" width="12" height="12" fill="#009b00"/><rect x="881" y="104" width="12" height="12" fill="#009b00"/><rect x="893" y="104" width="12" height="12" fill="#009b00"/><rect x="905" y="104" width="12" height="12" fill="#0e9a00"/><rect x="917" y="104" width="12" height="12" fill="#1d9800"/><rect x="929" y="104" width="12" height="12" fill="#2c9700"/><rect x="941" y="104" width="12" height="12" fill="#3b9600"/><rect x="725" y="116" width="12" height="12" fill="#009a24"/><rect x="737" y="116" width="12" height="12" fill="#009a21"/><rect x="749" y="116" width="12" height="12" fill="#009a1f"/><rect x="761" y="116" width="12" height="12" fill="#009a1d"/><rect x="773" y="116" width="12" height="12" fill="#009a1a"/><rect x="785" y="116" width="12" height="12" fill="#009a17"/><rect x="797" y="116" width="12" height="12" fill="#009a15"/><rect x="809" y="116" width="12" height="12" fill="#009a12"/><rect x="821" y="116" width="12" height="12" fill="#009a0f"/><rect x="833" y="116" width="12" height="12" fill="#009a0c"/><rect x="845" y="116" width="12" height="12" fill="#009b08"/><rect x="857" y="116" width="12" height="12" fill="#009b05"/><rect x="869" y="116" width="12" height="12" fill="#009b01"/><rect x="881" y="116" width="12" height="12" fill="#009b00"/><rect x="893" y="116" width="12" height="12" fill="#069a00"/><rect x="905" y="116" width="12" height="12" fill="#159900"/><rect x="917" y="116" width="12" height="12" fill="#249800"/><rect x="929" y="116" width="12" height="12" fill="#359700"/><rect x="941" y="116" width="12" height="12" fill="#459500"/><rect x="953" y="116" width="12" height="12" fill="#579400"/><rect x="965" y="116" width="12" height="12" fill="#699200"/><rect x="725" y="128" width="12" height="12" fill="#009a2b"/><rect x="737" y="128" width="12" height="12" fill="#009a28"/><rect x="749" y="128" width="12" height="12" fill="#009a26"/><rect x="761" y="128" width="12" height="12" fill="#009a24"/><rect x="773" y="128" width="12" height="12" fill="#009a21"/><rect x="785" y="128" width="12" height="12" fill="#009a1f"/><rect x="797" y="128" width="12" height="12" fill="#009a1c"/><rect x="809" y="128" width="12" height="12" fill="#009a19"/><rect x="821" y="128" width="12" height="12" fill="#009a16"/><rect x="833" y="128" width="12" height="12" fill="#009a13"/><rect x="845" y="128" width="12" height="12" fill="#009a10"/><rect x="857" y="128" width="12" height="12" fill="#009a0c"/><rect x="869" y="128" width="12" height="12" fill="#009b08"/><rect x="881" y="128" width="12" height="12" fill="#009b05"/><rect x="893" y="128" width="12" height="12" fill="#14ff01"/><rect x="905" y="128" width="12" height="12" fill="#1c9900"/><rect x="917" y="128" width="12" height="12" fill="#2d9700"/><rect x="929" y="128" width="12" height="12" fill="#3e9600"/><rect x="941" y="128" width="12" height="12" fill="#519400"/><rect x="953" y="128" width="12" height="12" fill="#649300"/><rect x="965" y="128" width="12" height="12" fill="#779100"/><rect x="977" y="128" width="12" height="12" fill="#8c9000"/><rect x="725" y="140" width="12" height="12" fill="#009932"/><rect x="737" y="140" width="12" height="12" fill="#009930"/><rect x="749" y="140" width="12" height="12" fill="#009a2e"/><rect x="761" y="140" width="12" height="12" fill="#009a2b"/><rect x="773" y="140" width="12" height="12" fill="#009a29"/><rect x="785" y="140" width="12" height="12" fill="#009a26"/><rect x="797" y="140" width="12" height="12" fill="#009a24"/><rect x="809" y="140" width="12" height="12" fill="#009a21"/><rect x="821" y="140" width="12" height="12" fill="#009a1e"/><rect x="833" y="140" width="12" height="12" fill="#009a1b"/><rect x="845" y="140" width="12" height="12" fill="#009a18"/><rect x="857" y="140" width="12" height="12" fill="#009a14"/><rect x="869" y="140" width="12" height="12" fill="#009a10"/><rect x="881" y="140" width="12" height="12" fill="#04ff15"/><rect x="893" y="140" width="12" height="12" fill="#20ff0e"/><rect x="905" y="140" width="12" height="12" fill="#3eff07"/><rect x="917" y="140" width="12" height="12" fill="#379600"/><rect x="929" y="140" width="12" height="12" fill="#4a9500"/><rect x="941" y="140" width="12" height="12" fill="#5e9300"/><rect x="953" y="140" width="12" height="12" fill="#729200"/><rect x="965" y="140" width="12" height="12" fill="#889000"/><rect x="977" y="140" width="12" height="12" fill="#938400"/><rect x="989" y="140" width="12" height="12" fill="#987500"/><rect x="725" y="152" width="12" height="12" fill="#00993b"/><rect x="737" y="152" width="12" height="12" fill="#009939"/><rect x="749" y="152" width="12" height="12" fill="#009936"/><rect x="761" y="152" width="12" height="12" fill="#009934"/><rect x="773" y="152" width="12" height="12" fill="#009932"/><rect x="785" y="152" width="12" height="12" fill="#009a2f"/><rect x="797" y="152" width="12" height="12" fill="#009a2d"/><rect x="809" y="152" width="12" height="12" fill="#009a2a"/><rect x="821" y="152" width="12" height="12" fill="#009a27"/><rect x="833" y="152" width="12" height="12" fill="#009a24"/><rect x="845" y="152" width="12" height="12" fill="#009a21"/><rect x="857" y="152" width="12" height="12" fill="#009a1d"/><rect x="869" y="152" width="12" height="12" fill="#009a19"/><rect x="881" y="152" width="12" height="12" fill="#10ff24"/><rect x="893" y="152" width="12" height="12" fill="#2eff1d"/><rect x="905" y="152" width="12" height="12" fill="#4eff16"/><rect x="917" y="152" width="12" height="12" fill="#71ff0e"/><rect x="929" y="152" width="12" height="12" fill="#96ff06"/><rect x="941" y="152" width="12" height="12" fill="#6d9200"/><rect x="953" y="152" width="12" height="12" fill="#849000"/><rect x="965" y="152" width="12" height="12" fill="#928600"/><rect x="977" y="152" width="12" height="12" fill="#987600"/><rect x="989" y="152" width="12" height="12" fill="#9c6800"/><rect x="1001" y="152" width="12" height="12" fill="#a05c00"/><rect x="1013" y="152" width="12" height="12" fill="#a45200"/><rect x="725" y="164" width="12" height="12" fill="#009944"/><rect x="737" y="164" width="12" height="12" fill="#009942"/><rect x="749" y="164" width="12" height="12" fill="#009940"/><rect x="761" y="164" width="12" height="12" fill="#00993e"/><rect x="773" y="164" width="12" height="12" fill="#00993c"/><rect x="785" y="164" width="12" height="12" fill="#009939"/><rect x="797" y="164" width="12" height="12" fill="#009937"/><rect x="809" y="164" width="12" height="12" fill="#009934"/><rect x="821" y="164" width="12" height="12" fill="#009931"/><rect x="833" y="164" width="12" height="12" fill="#009a2e"/><rect x="845" y="164" width="12" height="12" fill="#009a2b"/><rect x="857" y="164" width="12" height="12" fill="#009a28"/><rect x="869" y="164" width="12" height="12" fill="#009a24"/><rect x="881" y="164" width="12" height="12" fill="#1dff35"/><rect x="893" y="164" width="12" height="12" fill="#3eff2e"/><rect x="905" y="164" width="12" height="12" fill="#62ff27"/><rect x="917" y="164" width="12" height="12" fill="#89ff1f"/><rect x="929" y="164" width="12" height="12" fill="#b2ff17"/><rect x="941" y="164" width="12" height="12" fill="#dfff0e"/><rect x="953" y="164" width="12" height="12" fill="#ffef03"/><rect x="965" y="164" width="12" height="12" fill="#977700"/><rect x="977" y="164" width="12" height="12" fill="#9c6800"/><rect x="989" y="164" width="12" height="12" fill="#a05c00"/><rect x="1001" y="164" width="12" height="12" fill="#a45100"/><rect x="1013" y="164" width="12" height="12" fill="#a74800"/><rect x="1025" y="164" width="12" height="12" fill="#aa4000"/><rect x="725" y="176" width="12" height="12" fill="#00994e"/><rect x="737" y="176" width="12" height="12" fill="#00994d"/><rect x="749" y="176" width="12" height="12" fill="#00994b"/><rect x="761" y="176" width="12" height="12" fill="#009949"/><rect x="773" y="176" width="12" height="12" fill="#009947"/><rect x="785" y="176" width="12" height="12" fill="#009944"/><rect x="797" y="176" width="12" height="12" fill="#009942"/><rect x="809" y="176" width="12" height="12" fill="#00993f"/><rect x="821" y="176" width="12" height="12" fill="#00993d"/><rect x="833" y="176" width="12" height="12" fill="#00993a"/><rect x="845" y="176" width="12" height="12" fill="#009937"/><rect x="857" y="176" width="12" height="12" fill="#009934"/><rect x="869" y="176" width="12" height="12" fill="#0aff50"/><rect x="881" y="176" width="12" height="12" fill="#2cff4a"/><rect x="893" y="176" width="12" height="12" fill="#52ff43"/><rect x="905" y="176" width="12" height="12" fill="#7aff3c"/><rect x="917" y="176" width="12" height="12" fill="#a5ff34"/><rect x="929" y="176" width="12" height="12" fill="#d4ff2c"/><rect x="941" y="176" width="12" height="12" fill="#fff621"/><rect x="953" y="176" width="12" height="12" fill="#ffcb13"/><rect x="965" y="176" width="12" height="12" fill="#ffaa09"/><rect x="977" y="176" width="12" height="12" fill="#ff9100"/><rect x="989" y="176" width="12" height="12" fill="#a45000"/><rect x="1001" y="176" width="12" height="12" fill="#a84600"/><rect x="1013" y="176" width="12" height="12" fill="#ab3e00"/><rect x="1025" y="176" width="12" height="12" fill="#ad3700"/><rect x="1037" y="176" width="12" height="12" fill="#b03000"/><rect x="725" y="188" width="12" height="12" fill="#00985a"/><rect x="737" y="188" width="12" height="12" fill="#009859"/><rect x="749" y="188" width="12" height="12" fill="#009857"/><rect x="761" y="188" width="12" height="12" fill="#009855"/><rect x="773" y="188" width="12" height="12" fill="#009953"/><rect x="785" y="188" width="12" height="12" fill="#009951"/><rect x="797" y="188" width="12" height="12" fill="#00994f"/><rect x="809" y="188" width="12" height="12" fill="#00994d"/><rect x="821" y="188" width="12" height="12" fill="#00994a"/><rect x="833" y="188" width="12" height="12" fill="#009948"/><rect x="845" y="188" width="12" height="12" fill="#009945"/><rect x="857" y="188" width="12" height="12" fill="#009942"/><rect x="869" y="188" width="12" height="12" fill="#19ff68"/><rect x="881" y="188" width="12" height="12" fill="#3fff63"/><rect x="893" y="188" width="12" height="12" fill="#69ff5c"/><rect x="905" y="188" width="12" height="12" fill="#96ff55"/><rect x="917" y="188" width="12" height="12" fill="#c8ff4e"/><rect x="929" y="188" width="12" height="12" fill="#feff45"/><rect x="941" y="188" width="12" height="12" fill="#ffcf31"/><rect x="953" y="188" width="12" height="12" fill="#ffab22"/><rect x="965" y="188" width="12" height="12" fill="#ff8f16"/><rect x="977" y="188" width="12" height="12" fill="#ff790d"/><rect x="989" y="188" width="12" height="12" fill="#ff6705"/><rect x="1001" y="188" width="12" height="12" fill="#ab3c00"/><rect x="1013" y="188" width="12" height="12" fill="#ae3400"/><rect x="1025" y="188" width="12" height="12" fill="#b12d00"/><rect x="1037" y="188" width="12" height="12" fill="#b32700"/><rect x="1049" y="188" width="12" height="12" fill="#b52200"/><rect x="1061" y="188" width="12" height="12" fill="#b61d00"/><rect x="725" y="200" width="12" height="12" fill="#009868"/><rect x="737" y="200" width="12" height="12" fill="#009866"/><rect x="749" y="200" width="12" height="12" fill="#009865"/><rect x="761" y="200" width="12" height="12" fill="#009863"/><rect x="773" y="200" width="12" height="12" fill="#009862"/><rect x="785" y="200" width="12" height="12" fill="#009860"/><rect x="797" y="200" width="12" height="12" fill="#00985e"/><rect x="809" y="200" width="12" height="12" fill="#00985c"/><rect x="821" y="200" width="12" height="12" fill="#00985a"/><rect x="833" y="200" width="12" height="12" fill="#009858"/><rect x="845" y="200" width="12" height="12" fill="#009856"/><rect x="857" y="200" width="12" height="12" fill="#02ff8b"/><rect x="869" y="200" width="12" height="12" fill="#2aff86"/><rect x="881" y="200" width="12" height="12" fill="#56ff81"/><rect x="893" y="200" width="12" height="12" fill="#86ff7b"/><rect x="905" y="200" width="12" height="12" fill="#baff75"/><rect x="917" y="200" width="12" height="12" fill="#f3ff6e"/><rect x="929" y="200" width="12" height="12" fill="#ffd355"/><rect x="941" y="200" width="12" height="12" fill="#ffab3f"/><rect x="953" y="200" width="12" height="12" fill="#ff8e2f"/><rect x="965" y="200" width="12" height="12" fill="#ff7622"/><rect x="977" y="200" width="12" height="12" fill="#ff6418"/><rect x="989" y="200" width="12" height="12" fill="#ff540f"/><rect x="1001" y="200" width="12" height="12" fill="#ff4808"/><rect x="1013" y="200" width="12" height="12" fill="#ff3d02"/><rect x="1025" y="200" width="12" height="12" fill="#b42400"/><rect x="1037" y="200" width="12" height="12" fill="#b61f00"/><rect x="1049" y="200" width="12" height="12" fill="#b81a00"/><rect x="1061" y="200" width="12" height="12" fill="#b91600"/><rect x="1073" y="200" width="12" height="12" fill="#bb1200"/><rect x="725" y="212" width="12" height="12" fill="#009877"/><rect x="737" y="212" width="12" height="12" fill="#009876"/><rect x="749" y="212" width="12" height="12" fill="#009875"/><rect x="761" y="212" width="12" height="12" fill="#009874"/><rect x="773" y="212" width="12" height="12" fill="#009873"/><rect x="785" y="212" width="12" height="12" fill="#009872"/><rect x="797" y="212" width="12" height="12" fill="#009870"/><rect x="809" y="212" width="12" height="12" fill="#00986f"/><rect x="821" y="212" width="12" height="12" fill="#00986d"/><rect x="833" y="212" width="12" height="12" fill="#00986c"/><rect x="845" y="212" width="12" height="12" fill="#00986a"/><rect x="857" y="212" width="12" height="12" fill="#13ffae"/><rect x="869" y="212" width="12" height="12" fill="#40ffaa"/><rect x="881" y="212" width="12" height="12" fill="#72ffa6"/><rect x="893" y="212" width="12" height="12" fill="#aaffa2"/><rect x="905" y="212" width="12" height="12" fill="#e7ff9d"/><rect x="917" y="212" width="12" height="12" fill="#ffd880"/><rect x="929" y="212" width="12" height="12" fill="#ffac62"/><rect x="941" y="212" width="12" height="12" fill="#ff8c4b"/><rect x="953" y="212" width="12" height="12" fill="#ff733a"/><rect x="965" y="212" width="12" height="12" fill="#ff5f2d"/><rect x="977" y="212" width="12" height="12" fill="#ff5022"/><rect x="989" y="212" width="12" height="12" fill="#ff4319"/><rect x="1001" y="212" width="12" height="12" fill="#ff3812"/><rect x="1013" y="212" width="12" height="12" fill="#ff2e0b"/><rect x="1025" y="212" width="12" height="12" fill="#ff2606"/><rect x="1037" y="212" width="12" height="12" fill="#ff1f01"/><rect x="1049" y="212" width="12" height="12" fill="#bb1200"/><rect x="1061" y="212" width="12" height="12" fill="#bc0f00"/><rect x="1073" y="212" width="12" height="12" fill="#be0b00"/><rect x="1085" y="212" width="12" height="12" fill="#bf0800"/><rect x="1097" y="212" width="12" height="12" fill="#c00500"/><rect x="725" y="224" width="12" height="12" fill="#009789"/><rect x="737" y="224" width="12" height="12" fill="#009788"/><rect x="749" y="224" width="12" height="12" fill="#009788"/><rect x="761" y="224" width="12" height="12" fill="#009787"/><rect x="773" y="224" width="12" height="12" fill="#009787"/><rect x="785" y="224" width="12" height="12" fill="#009786"/><rect x="797" y="224" width="12" height="12" fill="#009786"/><rect x="809" y="224" width="12" height="12" fill="#009785"/><rect x="821" y="224" width="12" height="12" fill="#009784"/><rect x="833" y="224" width="12" height="12" fill="#009783"/><rect x="845" y="224" width="12" height="12" fill="#009783"/><rect x="857" y="224" width="12" height="12" fill="#28ffda"/><rect x="869" y="224" width="12" height="12" fill="#5cffd8"/><rect x="881" y="224" width="12" height="12" fill="#97ffd6"/><rect x="893" y="224" width="12" height="12" fill="#d9ffd4"/><rect x="905" y="224" width="12" height="12" fill="#ffdfb7"/><rect x="917" y="224" width="12" height="12" fill="#ffad8c"/><rect x="929" y="224" width="12" height="12" fill="#ff896e"/><rect x="941" y="224" width="12" height="12" fill="#ff6f57"/><rect x="953" y="224" width="12" height="12" fill="#ff5b45"/><rect x="965" y="224" width="12" height="12" fill="#ff4a37"/><rect x="977" y="224" width="12" height="12" fill="#ff3d2c"/><rect x="989" y="224" width="12" height="12" fill="#ff3222"/><rect x="1001" y="224" width="12" height="12" fill="#ff291a"/><rect x="1013" y="224" width="12" height="12" fill="#ff2113"/><rect x="1025" y="224" width="12" height="12" fill="#ff1a0d"/><rect x="1037" y="224" width="12" height="12" fill="#ff1408"/><rect x="1049" y="224" width="12" height="12" fill="#ff0f04"/><rect x="1061" y="224" width="12" height="12" fill="#ff0a00"/><rect x="1073" y="224" width="12" height="12" fill="#c10400"/><rect x="1085" y="224" width="12" height="12" fill="#c20100"/><rect x="1097" y="224" width="12" height="12" fill="#c30000"/><rect x="1109" y="224" width="12" height="12" fill="#c30000"/><rect x="725" y="236" width="12" height="12" fill="#009298"/><rect x="737" y="236" width="12" height="12" fill="#009299"/><rect x="749" y="236" width="12" height="12" fill="#009199"/><rect x="761" y="236" width="12" height="12" fill="#009199"/><rect x="773" y="236" width="12" height="12" fill="#009199"/><rect x="785" y="236" width="12" height="12" fill="#009199"/><rect x="797" y="236" width="12" height="12" fill="#009099"/><rect x="809" y="236" width="12" height="12" fill="#009099"/><rect x="821" y="236" width="12" height="12" fill="#009099"/><rect x="833" y="236" width="12" height="12" fill="#008f99"/><rect x="845" y="236" width="12" height="12" fill="#0aedff"/><rect x="857" y="236" width="12" height="12" fill="#3decff"/><rect x="869" y="236" width="12" height="12" fill="#76eaff"/><rect x="881" y="236" width="12" height="12" fill="#b6e9ff"/><rect x="893" y="236" width="12" height="12" fill="#ffe8fe"/><rect x="905" y="236" width="12" height="12" fill="#ffaec0"/><rect x="917" y="236" width="12" height="12" fill="#ff8796"/><rect x="929" y="236" width="12" height="12" fill="#ff6a78"/><rect x="941" y="236" width="12" height="12" fill="#ff5561"/><rect x="953" y="236" width="12" height="12" fill="#ff444f"/><rect x="965" y="236" width="12" height="12" fill="#ff3741"/><rect x="977" y="236" width="12" height="12" fill="#ff2c35"/><rect x="989" y="236" width="12" height="12" fill="#ff222b"/><rect x="1001" y="236" width="12" height="12" fill="#ff1b22"/><rect x="1013" y="236" width="12" height="12" fill="#ff141b"/><rect x="1025" y="236" width="12" height="12" fill="#ff0e15"/><rect x="1037" y="236" width="12" height="12" fill="#ff090f"/><rect x="1049" y="236" width="12" height="12" fill="#ff040a"/><rect x="1061" y="236" width="12" height="12" fill="#ff0006"/><rect x="1073" y="236" width="12" height="12" fill="#c30002"/><rect x="1085" y="236" width="12" height="12" fill="#c30000"/><rect x="1097" y="236" width="12" height="12" fill="#c30000"/><rect x="1109" y="236" width="12" height="12" fill="#c30000"/><rect x="1121" y="236" width="12" height="12" fill="#c30000"/><rect x="725" y="248" width="12" height="12" fill="#00829e"/><rect x="737" y="248" width="12" height="12" fill="#00819e"/><rect x="749" y="248" width="12" height="12" fill="#00819f"/><rect x="761" y="248" width="12" height="12" fill="#00809f"/><rect x="773" y="248" width="12" height="12" fill="#007f9f"/><rect x="785" y="248" width="12" height="12" fill="#007ea0"/><rect x="797" y="248" width="12" height="12" fill="#007da0"/><rect x="809" y="248" width="12" height="12" fill="#007ca0"/><rect x="821" y="248" width="12" height="12" fill="#007aa1"/><rect x="833" y="248" width="12" height="12" fill="#0079a1"/><rect x="845" y="248" width="12" height="12" fill="#1abcff"/><rect x="857" y="248" width="12" height="12" fill="#4ab9ff"/><rect x="869" y="248" width="12" height="12" fill="#7fb5ff"/><rect x="881" y="248" width="12" height="12" fill="#b9b1ff"/><rect x="893" y="248" width="12" height="12" fill="#faacff"/><rect x="905" y="248" width="12" height="12" fill="#ff83c8"/><rect x="917" y="248" width="12" height="12" fill="#ff65a0"/><rect x="929" y="248" width="12" height="12" fill="#ff4f82"/><rect x="941" y="248" width="12" height="12" fill="#ff3d6a"/><rect x="953" y="248" width="12" height="12" fill="#ff3058"/><rect x="965" y="248" width="12" height="12" fill="#ff2549"/><rect x="977" y="248" width="12" height="12" fill="#ff1c3d"/><rect x="989" y="248" width="12" height="12" fill="#ff1433"/><rect x="1001" y="248" width="12" height="12" fill="#ff0d2a"/><rect x="1013" y="248" width="12" height="12" fill="#ff0822"/><rect x="1025" y="248" width="12" height="12" fill="#ff031c"/><rect x="1037" y="248" width="12" height="12" fill="#c20011"/><rect x="1049" y="248" width="12" height="12" fill="#c2000d"/><rect x="1061" y="248" width="12" height="12" fill="#c20009"/><rect x="1073" y="248" width="12" height="12" fill="#c20006"/><rect x="1085" y="248" width="12" height="12" fill="#c20003"/><rect x="1097" y="248" width="12" height="12" fill="#c30001"/><rect x="1109" y="248" width="12" height="12" fill="#c30000"/><rect x="1121" y="248" width="12" height="12" fill="#c30000"/><rect x="1133" y="248" width="12" height="12" fill="#c30000"/><rect x="1145" y="248" width="12" height="12" fill="#c30000"/><rect x="725" y="260" width="12" height="12" fill="#0073a3"/><rect x="737" y="260" width="12" height="12" fill="#0072a4"/><rect x="749" y="260" width="12" height="12" fill="#0071a4"/><rect x="761" y="260" width="12" height="12" fill="#006fa5"/><rect x="773" y="260" width="12" height="12" fill="#006ea5"/><rect x="785" y="260" width="12" height="12" fill="#006ca6"/><rect x="797" y="260" width="12" height="12" fill="#006aa7"/><rect x="809" y="260" width="12" height="12" fill="#0068a7"/><rect x="821" y="260" width="12" height="12" fill="#0066a8"/><rect x="833" y="260" width="12" height="12" fill="#0064a9"/><rect x="845" y="260" width="12" height="12" fill="#2892ff"/><rect x="857" y="260" width="12" height="12" fill="#548dff"/><rect x="869" y="260" width="12" height="12" fill="#8588ff"/><rect x="881" y="260" width="12" height="12" fill="#bb82ff"/><rect x="893" y="260" width="12" height="12" fill="#f67bff"/><rect x="905" y="260" width="12" height="12" fill="#ff5ecf"/><rect x="917" y="260" width="12" height="12" fill="#ff47a8"/><rect x="929" y="260" width="12" height="12" fill="#ff358a"/><rect x="941" y="260" width="12" height="12" fill="#ff2873"/><rect x="953" y="260" width="12" height="12" fill="#ff1d61"/><rect x="965" y="260" width="12" height="12" fill="#ff1452"/><rect x="977" y="260" width="12" height="12" fill="#ff0c45"/><rect x="989" y="260" width="12" height="12" fill="#ff063a"/><rect x="1001" y="260" width="12" height="12" fill="#ff0131"/><rect x="1013" y="260" width="12" height="12" fill="#c1001f"/><rect x="1025" y="260" width="12" height="12" fill="#c1001a"/><rect x="1037" y="260" width="12" height="12" fill="#c20016"/><rect x="1049" y="260" width="12" height="12" fill="#c20011"/><rect x="1061" y="260" width="12" height="12" fill="#c2000e"/><rect x="1073" y="260" width="12" height="12" fill="#c2000a"/><rect x="1085" y="260" width="12" height="12" fill="#c20007"/><rect x="1097" y="260" width="12" height="12" fill="#c20005"/><rect x="1109" y="260" width="12" height="12" fill="#c20002"/><rect x="1121" y="260" width="12" height="12" fill="#c30000"/><rect x="1133" y="260" width="12" height="12" fill="#c30000"/><rect x="1145" y="260" width="12" height="12" fill="#c30000"/><rect x="1157" y="260" width="12" height="12" fill="#c30000"/><rect x="725" y="272" width="12" height="12" fill="#0065a9"/><rect x="737" y="272" width="12" height="12" fill="#0063a9"/><rect x="749" y="272" width="12" height="12" fill="#0061aa"/><rect x="761" y="272" width="12" height="12" fill="#0060ab"/><rect x="773" y="272" width="12" height="12" fill="#005eab"/><rect x="785" y="272" width="12" height="12" fill="#005bac"/><rect x="797" y="272" width="12" height="12" fill="#0059ad"/><rect x="809" y="272" width="12" height="12" fill="#0056ae"/><rect x="821" y="272" width="12" height="12" fill="#0054af"/><rect x="833" y="272" width="12" height="12" fill="#0d74ff"/><rect x="845" y="272" width="12" height="12" fill="#336fff"/><rect x="857" y="272" width="12" height="12" fill="#5d68ff"/><rect x="869" y="272" width="12" height="12" fill="#8b62ff"/><rect x="881" y="272" width="12" height="12" fill="#bd5bff"/><rect x="893" y="272" width="12" height="12" fill="#f353ff"/><rect x="905" y="272" width="12" height="12" fill="#ff3ed5"/><rect x="917" y="272" width="12" height="12" fill="#ff2caf"/><rect x="929" y="272" width="12" height="12" fill="#ff1e92"/><rect x="941" y="272" width="12" height="12" fill="#ff147b"/><rect x="953" y="272" width="12" height="12" fill="#ff0b68"/><rect x="965" y="272" width="12" height="12" fill="#ff0459"/><rect x="977" y="272" width="12" height="12" fill="#c0003a"/><rect x="989" y="272" width="12" height="12" fill="#c00031"/><rect x="1001" y="272" width="12" height="12" fill="#c1002a"/><rect x="1013" y="272" width="12" height="12" fill="#c10024"/><rect x="1025" y="272" width="12" height="12" fill="#c1001f"/><rect x="1037" y="272" width="12" height="12" fill="#c1001a"/><rect x="1049" y="272" width="12" height="12" fill="#c20016"/><rect x="1061" y="272" width="12" height="12" fill="#c20012"/><rect x="1073" y="272" width="12" height="12" fill="#c2000f"/><rect x="1085" y="272" width="12" height="12" fill="#c2000b"/><rect x="1097" y="272" width="12" height="12" fill="#c20009"/><rect x="1109" y="272" width="12" height="12" fill="#c20006"/><rect x="1121" y="272" width="12" height="12" fill="#c20004"/><rect x="1133" y="272" width="12" height="12" fill="#c30001"/><rect x="1145" y="272" width="12" height="12" fill="#c30000"/><rect x="1157" y="272" width="12" height="12" fill="#c30000"/><rect x="1169" y="272" width="12" height="12" fill="#c30000"/><rect x="725" y="284" width="12" height="12" fill="#0057ae"/><rect x="737" y="284" width="12" height="12" fill="#0055af"/><rect x="749" y="284" width="12" height="12" fill="#0053af"/><rect x="761" y="284" width="12" height="12" fill="#0051b0"/><rect x="773" y="284" width="12" height="12" fill="#004eb1"/><rect x="785" y="284" width="12" height="12" fill="#004bb3"/><rect x="797" y="284" width="12" height="12" fill="#0048b4"/><rect x="809" y="284" width="12" height="12" fill="#0045b5"/><rect x="821" y="284" width="12" height="12" fill="#0042b6"/><rect x="833" y="284" width="12" height="12" fill="#1956ff"/><rect x="845" y="284" width="12" height="12" fill="#3e4fff"/><rect x="857" y="284" width="12" height="12" fill="#6548ff"/><rect x="869" y="284" width="12" height="12" fill="#9041ff"/><rect x="881" y="284" width="12" height="12" fill="#be39ff"/><rect x="893" y="284" width="12" height="12" fill="#f130ff"/><rect x="905" y="284" width="12" height="12" fill="#ff21db"/><rect x="917" y="284" width="12" height="12" fill="#ff14b6"/><rect x="929" y="284" width="12" height="12" fill="#ff0999"/><rect x="941" y="284" width="12" height="12" fill="#ff0182"/><rect x="953" y="284" width="12" height="12" fill="#bf0054"/><rect x="965" y="284" width="12" height="12" fill="#bf0048"/><rect x="977" y="284" width="12" height="12" fill="#c0003f"/><rect x="989" y="284" width="12" height="12" fill="#c00036"/><rect x="1001" y="284" width="12" height="12" fill="#c1002f"/><rect x="1013" y="284" width="12" height="12" fill="#c10029"/><rect x="1025" y="284" width="12" height="12" fill="#c10024"/><rect x="1037" y="284" width="12" height="12" fill="#c1001f"/><rect x="1049" y="284" width="12" height="12" fill="#c1001a"/><rect x="1061" y="284" width="12" height="12" fill="#c20016"/><rect x="1073" y="284" width="12" height="12" fill="#c20013"/><rect x="1085" y="284" width="12" height="12" fill="#c2000f"/><rect x="1097" y="284" width="12" height="12" fill="#c2000c"/><rect x="1109" y="284" width="12" height="12" fill="#c2000a"/><rect x="1121" y="284" width="12" height="12" fill="#c20007"/><rect x="1133" y="284" width="12" height="12" fill="#c20005"/><rect x="1145" y="284" width="12" height="12" fill="#c20003"/><rect x="1157" y="284" width="12" height="12" fill="#c30001"/><rect x="1169" y="284" width="12" height="12" fill="#c30000"/><rect x="1181" y="284" width="12" height="12" fill="#c30000"/><rect x="725" y="296" width="12" height="12" fill="#004ab3"/><rect x="737" y="296" width="12" height="12" fill="#0048b4"/><rect x="749" y="296" width="12" height="12" fill="#0045b5"/><rect x="761" y="296" width="12" height="12" fill="#0042b6"/><rect x="773" y="296" width="12" height="12" fill="#003fb7"/><rect x="785" y="296" width="12" height="12" fill="#003cb9"/><rect x="797" y="296" width="12" height="12" fill="#0038ba"/><rect x="809" y="296" width="12" height="12" fill="#0035bc"/><rect x="821" y="296" width="12" height="12" fill="#0341ff"/><rect x="833" y="296" width="12" height="12" fill="#243bff"/><rect x="845" y="296" width="12" height="12" fill="#4734ff"/><rect x="857" y="296" width="12" height="12" fill="#6c2cff"/><rect x="869" y="296" width="12" height="12" fill="#9424ff"/><rect x="881" y="296" width="12" height="12" fill="#c01cff"/><rect x="893" y="296" width="12" height="12" fill="#ef12ff"/><rect x="905" y="296" width="12" height="12" fill="#ff07e0"/><rect x="917" y="296" width="12" height="12" fill="#bd008b"/><rect x="929" y="296" width="12" height="12" fill="#be0077"/><rect x="941" y="296" width="12" height="12" fill="#be0066"/><rect x="953" y="296" width="12" height="12" fill="#bf0059"/><rect x="965" y="296" width="12" height="12" fill="#bf004d"/><rect x="977" y="296" width="12" height="12" fill="#c00044"/><rect x="989" y="296" width="12" height="12" fill="#c0003b"/><rect x="1001" y="296" width="12" height="12" fill="#c00034"/><rect x="1013" y="296" width="12" height="12" fill="#c1002e"/><rect x="1025" y="296" width="12" height="12" fill="#c10028"/><rect x="1037" y="296" width="12" height="12" fill="#c10023"/><rect x="1049" y="296" width="12" height="12" fill="#c1001e"/><rect x="1061" y="296" width="12" height="12" fill="#c1001a"/><rect x="1073" y="296" width="12" height="12" fill="#c20017"/><rect x="1085" y="296" width="12" height="12" fill="#c20013"/><rect x="1097" y="296" width="12" height="12" fill="#c20010"/><rect x="1109" y="296" width="12" height="12" fill="#c2000d"/><rect x="1121" y="296" width="12" height="12" fill="#c2000b"/><rect x="1133" y="296" width="12" height="12" fill="#c20008"/><rect x="1145" y="296" width="12" height="12" fill="#c20006"/><rect x="1157" y="296" width="12" height="12" fill="#c20004"/><rect x="1169" y="296" width="12" height="12" fill="#c30002"/><rect x="1181" y="296" width="12" height="12" fill="#c30000"/><rect x="725" y="308" width="12" height="12" fill="#003db8"/><rect x="737" y="308" width="12" height="12" fill="#003bb9"/><rect x="749" y="308" width="12" height="12" fill="#0038bb"/><rect x="761" y="308" width="12" height="12" fill="#0034bc"/><rect x="773" y="308" width="12" height="12" fill="#0031be"/><rect x="785" y="308" width="12" height="12" fill="#002dbf"/><rect x="797" y="308" width="12" height="12" fill="#0029c1"/><rect x="809" y="308" width="12" height="12" fill="#0025c3"/><rect x="821" y="308" width="12" height="12" fill="#0e2aff"/><rect x="833" y="308" width="12" height="12" fill="#2d23ff"/><rect x="845" y="308" width="12" height="12" fill="#4f1cff"/><rect x="857" y="308" width="12" height="12" fill="#7214ff"/><rect x="869" y="308" width="12" height="12" fill="#980bff"/><rect x="881" y="308" width="12" height="12" fill="#c102ff"/><rect x="893" y="308" width="12" height="12" fill="#af00bc"/><rect x="905" y="308" width="12" height="12" fill="#bc00a8"/><rect x="917" y="308" width="12" height="12" fill="#bd008f"/><rect x="929" y="308" width="12" height="12" fill="#bd007b"/><rect x="941" y="308" width="12" height="12" fill="#be006b"/><rect x="953" y="308" width="12" height="12" fill="#bf005d"/><rect x="965" y="308" width="12" height="12" fill="#bf0052"/><rect x="977" y="308" width="12" height="12" fill="#bf0048"/><rect x="989" y="308" width="12" height="12" fill="#c00040"/><rect x="1001" y="308" width="12" height="12" fill="#c00038"/><rect x="1013" y="308" width="12" height="12" fill="#c00032"/><rect x="1025" y="308" width="12" height="12" fill="#c1002c"/><rect x="1037" y="308" width="12" height="12" fill="#c10027"/><rect x="1049" y="308" width="12" height="12" fill="#c10022"/><rect x="1061" y="308" width="12" height="12" fill="#c1001e"/><rect x="1073" y="308" width="12" height="12" fill="#c1001a"/><rect x="1085" y="308" width="12" height="12" fill="#c20017"/><rect x="1097" y="308" width="12" height="12" fill="#c20014"/><rect x="1109" y="308" width="12" height="12" fill="#c20011"/><rect x="1121" y="308" width="12" height="12" fill="#c2000e"/><rect x="1133" y="308" width="12" height="12" fill="#c2000b"/><rect x="1145" y="308" width="12" height="12" fill="#c20009"/><rect x="1157" y="308" width="12" height="12" fill="#c20007"/><rect x="1169" y="308" width="12" height="12" fill="#c20005"/><rect x="1181" y="308" width="12" height="12" fill="#c20003"/><rect x="725" y="320" width="12" height="12" fill="#0031bd"/><rect x="737" y="320" width="12" height="12" fill="#002ebf"/><rect x="749" y="320" width="12" height="12" fill="#002bc0"/><rect x="761" y="320" width="12" height="12" fill="#0027c2"/><rect x="773" y="320" width="12" height="12" fill="#0023c4"/><rect x="785" y="320" width="12" height="12" fill="#001fc6"/><rect x="797" y="320" width="12" height="12" fill="#001bc8"/><rect x="809" y="320" width="12" height="12" fill="#0016cb"/><rect x="821" y="320" width="12" height="12" fill="#1815ff"/><rect x="833" y="320" width="12" height="12" fill="#360eff"/><rect x="845" y="320" width="12" height="12" fill="#5606ff"/><rect x="857" y="320" width="12" height="12" fill="#5e00c8"/><rect x="869" y="320" width="12" height="12" fill="#7700c4"/><rect x="881" y="320" width="12" height="12" fill="#9200c0"/><rect x="893" y="320" width="12" height="12" fill="#ae00bc"/><rect x="905" y="320" width="12" height="12" fill="#bb00ab"/><rect x="917" y="320" width="12" height="12" fill="#bc0093"/><rect x="929" y="320" width="12" height="12" fill="#bd007f"/><rect x="941" y="320" width="12" height="12" fill="#be006f"/><rect x="953" y="320" width="12" height="12" fill="#be0062"/><rect x="965" y="320" width="12" height="12" fill="#bf0056"/><rect x="977" y="320" width="12" height="12" fill="#bf004c"/><rect x="989" y="320" width="12" height="12" fill="#c00044"/><rect x="1001" y="320" width="12" height="12" fill="#c0003d"/><rect x="1013" y="320" width="12" height="12" fill="#c00036"/><rect x="1025" y="320" width="12" height="12" fill="#c10030"/><rect x="1037" y="320" width="12" height="12" fill="#c1002b"/><rect x="1049" y="320" width="12" height="12" fill="#c10026"/><rect x="1061" y="320" width="12" height="12" fill="#c10022"/><rect x="1073" y="320" width="12" height="12" fill="#c1001e"/><rect x="1085" y="320" width="12" height="12" fill="#c1001a"/><rect x="1097" y="320" width="12" height="12" fill="#c20017"/><rect x="1109" y="320" width="12" height="12" fill="#c20014"/><rect x="1121" y="320" width="12" height="12" fill="#c20011"/><rect x="1133" y="320" width="12" height="12" fill="#c2000f"/><rect x="1145" y="320" width="12" height="12" fill="#c2000c"/><rect x="1157" y="320" width="12" height="12" fill="#c2000a"/><rect x="1169" y="320" width="12" height="12" fill="#c20008"/><rect x="1181" y="320" width="12" height="12" fill="#c20006"/><rect x="725" y="332" width="12" height="12" fill="#0025c3"/><rect x="737" y="332" width="12" height="12" fill="#0022c5"/><rect x="749" y="332" width="12" height="12" fill="#001ec6"/><rect x="761" y="332" width="12" height="12" fill="#001ac8"/><rect x="773" y="332" width="12" height="12" fill="#0016cb"/><rect x="785" y="332" width="12" height="12" fill="#0011cd"/><rect x="797" y="332" width="12" height="12" fill="#000dd0"/><rect x="809" y="332" width="12" height="12" fill="#0609ff"/><rect x="821" y="332" width="12" height="12" fill="#2102ff"/><rect x="833" y="332" width="12" height="12" fill="#3200cf"/><rect x="845" y="332" width="12" height="12" fill="#4900cb"/><rect x="857" y="332" width="12" height="12" fill="#6100c7"/><rect x="869" y="332" width="12" height="12" fill="#7a00c4"/><rect x="881" y="332" width="12" height="12" fill="#9300c0"/><rect x="893" y="332" width="12" height="12" fill="#ad00bd"/><rect x="905" y="332" width="12" height="12" fill="#bb00ad"/><rect x="917" y="332" width="12" height="12" fill="#bc0096"/><rect x="929" y="332" width="12" height="12" fill="#bd0083"/><rect x="941" y="332" width="12" height="12" fill="#be0073"/><rect x="953" y="332" width="12" height="12" fill="#be0066"/><rect x="965" y="332" width="12" height="12" fill="#bf005a"/><rect x="977" y="332" width="12" height="12" fill="#bf0051"/><rect x="989" y="332" width="12" height="12" fill="#bf0048"/><rect x="1001" y="332" width="12" height="12" fill="#c00041"/><rect x="1013" y="332" width="12" height="12" fill="#c0003a"/><rect x="1025" y="332" width="12" height="12" fill="#c00034"/><rect x="1037" y="332" width="12" height="12" fill="#c1002f"/><rect x="1049" y="332" width="12" height="12" fill="#c1002a"/><rect x="1061" y="332" width="12" height="12" fill="#c10025"/><rect x="1073" y="332" width="12" height="12" fill="#c10021"/><rect x="1085" y="332" width="12" height="12" fill="#c1001e"/><rect x="1097" y="332" width="12" height="12" fill="#c1001a"/><rect x="1109" y="332" width="12" height="12" fill="#c20017"/><rect x="1121" y="332" width="12" height="12" fill="#c20014"/><rect x="1133" y="332" width="12" height="12" fill="#c20012"/><rect x="1145" y="332" width="12" height="12" fill="#c2000f"/><rect x="1157" y="332" width="12" height="12" fill="#c2000d"/><rect x="1169" y="332" width="12" height="12" fill="#c2000b"/><rect x="1181" y="332" width="12" height="12" fill="#c20009"/><rect x="725" y="344" width="12" height="12" fill="#001ac9"/><rect x="737" y="344" width="12" height="12" fill="#0016cb"/><rect x="749" y="344" width="12" height="12" fill="#0012cd"/><rect x="761" y="344" width="12" height="12" fill="#000ecf"/><rect x="773" y="344" width="12" height="12" fill="#0009d2"/><rect x="785" y="344" width="12" height="12" fill="#0004d5"/><rect x="797" y="344" width="12" height="12" fill="#0000d8"/><rect x="809" y="344" width="12" height="12" fill="#0d00d6"/><rect x="821" y="344" width="12" height="12" fill="#2200d2"/><rect x="833" y="344" width="12" height="12" fill="#3800ce"/><rect x="845" y="344" width="12" height="12" fill="#4e00ca"/><rect x="857" y="344" width="12" height="12" fill="#6400c7"/><rect x="869" y="344" width="12" height="12" fill="#7b00c3"/><rect x="881" y="344" width="12" height="12" fill="#9300c0"/><rect x="893" y="344" width="12" height="12" fill="#ac00bd"/><rect x="905" y="344" width="12" height="12" fill="#bb00b0"/><rect x="917" y="344" width="12" height="12" fill="#bc0099"/><rect x="929" y="344" width="12" height="12" fill="#bd0086"/><rect x="941" y="344" width="12" height="12" fill="#be0077"/><rect x="953" y="344" width="12" height="12" fill="#be006a"/><rect x="965" y="344" width="12" height="12" fill="#bf005e"/><rect x="977" y="344" width="12" height="12" fill="#bf0054"/><rect x="989" y="344" width="12" height="12" fill="#bf004c"/><rect x="1001" y="344" width="12" height="12" fill="#c00044"/><rect x="1013" y="344" width="12" height="12" fill="#c0003e"/><rect x="1025" y="344" width="12" height="12" fill="#c00038"/><rect x="1037" y="344" width="12" height="12" fill="#c00032"/><rect x="1049" y="344" width="12" height="12" fill="#c1002d"/><rect x="1061" y="344" width="12" height="12" fill="#c10029"/><rect x="1073" y="344" width="12" height="12" fill="#c10025"/><rect x="1085" y="344" width="12" height="12" fill="#c10021"/><rect x="1097" y="344" width="12" height="12" fill="#c1001e"/><rect x="1109" y="344" width="12" height="12" fill="#c1001a"/><rect x="1121" y="344" width="12" height="12" fill="#c20017"/><rect x="1133" y="344" width="12" height="12" fill="#c20015"/><rect x="1145" y="344" width="12" height="12" fill="#c20012"/><rect x="1157" y="344" width="12" height="12" fill="#c20010"/><rect x="1169" y="344" width="12" height="12" fill="#c2000e"/><rect x="1181" y="344" width="12" height="12" fill="#c2000b"/><rect x="725" y="356" width="12" height="12" fill="#000ecf"/><rect x="737" y="356" width="12" height="12" fill="#000ad1"/><rect x="749" y="356" width="12" height="12" fill="#0006d4"/><rect x="761" y="356" width="12" height="12" fill="#0001d7"/><rect x="773" y="356" width="12" height="12" fill="#0000d8"/><rect x="785" y="356" width="12" height="12" fill="#0000d8"/><rect x="797" y="356" width="12" height="12" fill="#0000d8"/><rect x="809" y="356" width="12" height="12" fill="#1400d4"/><rect x="821" y="356" width="12" height="12" fill="#2800d1"/><rect x="833" y="356" width="12" height="12" fill="#3c00cd"/><rect x="845" y="356" width="12" height="12" fill="#5100ca"/><rect x="857" y="356" width="12" height="12" fill="#6700c6"/><rect x="869" y="356" width="12" height="12" fill="#7d00c3"/><rect x="881" y="356" width="12" height="12" fill="#9400c0"/><rect x="893" y="356" width="12" height="12" fill="#ab00bd"/><rect x="905" y="356" width="12" height="12" fill="#bb00b2"/><rect x="917" y="356" width="12" height="12" fill="#bc009c"/><rect x="929" y="356" width="12" height="12" fill="#bd0089"/><rect x="941" y="356" width="12" height="12" fill="#bd007a"/><rect x="953" y="356" width="12" height="12" fill="#be006d"/><rect x="965" y="356" width="12" height="12" fill="#be0062"/><rect x="977" y="356" width="12" height="12" fill="#bf0058"/><rect x="989" y="356" width="12" height="12" fill="#bf0050"/><rect x="1001" y="356" width="12" height="12" fill="#c00048"/><rect x="1013" y="356" width="12" height="12" fill="#c00041"/><rect x="1025" y="356" width="12" height="12" fill="#c0003b"/><rect x="1037" y="356" width="12" height="12" fill="#c00036"/><rect x="1049" y="356" width="12" height="12" fill="#c00031"/><rect x="1061" y="356" width="12" height="12" fill="#c1002c"/><rect x="1073" y="356" width="12" height="12" fill="#c10028"/><rect x="1085" y="356" width="12" height="12" fill="#c10024"/><rect x="1097" y="356" width="12" height="12" fill="#c10021"/><rect x="1109" y="356" width="12" height="12" fill="#c1001d"/><rect x="1121" y="356" width="12" height="12" fill="#c1001a"/><rect x="1133" y="356" width="12" height="12" fill="#c20018"/><rect x="1145" y="356" width="12" height="12" fill="#c20015"/><rect x="1157" y="356" width="12" height="12" fill="#c20013"/><rect x="1169" y="356" width="12" height="12" fill="#c20010"/><rect x="1181" y="356" width="12" height="12" fill="#c2000e"/><rect x="725" y="368" width="12" height="12" fill="#0006d4"/><rect x="737" y="368" width="12" height="12" fill="#0002d7"/><rect x="749" y="368" width="12" height="12" fill="#0000d8"/><rect x="761" y="368" width="12" height="12" fill="#0000d8"/><rect x="773" y="368" width="12" height="12" fill="#0000d8"/><rect x="785" y="368" width="12" height="12" fill="#0000d8"/><rect x="797" y="368" width="12" height="12" fill="#0500d7"/><rect x="809" y="368" width="12" height="12" fill="#1800d3"/><rect x="821" y="368" width="12" height="12" fill="#2c00d0"/><rect x="833" y="368" width="12" height="12" fill="#4000cc"/><rect x="845" y="368" width="12" height="12" fill="#5400c9"/><rect x="857" y="368" width="12" height="12" fill="#6900c6"/><rect x="869" y="368" width="12" height="12" fill="#7e00c3"/><rect x="881" y="368" width="12" height="12" fill="#9400c0"/><rect x="893" y="368" width="12" height="12" fill="#ab00bd"/><rect x="905" y="368" width="12" height="12" fill="#bb00b3"/><rect x="917" y="368" width="12" height="12" fill="#bc009e"/><rect x="929" y="368" width="12" height="12" fill="#bd008c"/><rect x="941" y="368" width="12" height="12" fill="#bd007d"/><rect x="953" y="368" width="12" height="12" fill="#be0070"/><rect x="965" y="368" width="12" height="12" fill="#be0064"/><rect x="977" y="368" width="12" height="12" fill="#bf005b"/><rect x="989" y="368" width="12" height="12" fill="#bf0052"/><rect x="1001" y="368" width="12" height="12" fill="#bf004b"/><rect x="1013" y="368" width="12" height="12" fill="#c00044"/><rect x="1025" y="368" width="12" height="12" fill="#c0003e"/><rect x="1037" y="368" width="12" height="12" fill="#c00038"/><rect x="1049" y="368" width="12" height="12" fill="#c00033"/><rect x="1061" y="368" width="12" height="12" fill="#c1002e"/><rect x="1073" y="368" width="12" height="12" fill="#c1002a"/><rect x="1085" y="368" width="12" height="12" fill="#c10026"/><rect x="1097" y="368" width="12" height="12" fill="#c10023"/><rect x="1109" y="368" width="12" height="12" fill="#c10020"/><rect x="1121" y="368" width="12" height="12" fill="#c1001d"/><rect x="1133" y="368" width="12" height="12" fill="#c1001a"/><rect x="1145" y="368" width="12" height="12" fill="#c20017"/><rect x="1157" y="368" width="12" height="12" fill="#c20015"/><rect x="1169" y="368" width="12" height="12" fill="#c20012"/><rect x="1181" y="368" width="12" height="12" fill="#c20010"/></g></g>
<defs><linearGradient id="inA" x1="0" y1="0" x2="1" y2="1"><stop offset="0" stop-color="#80f8c0"/><stop offset="0.5" stop-color="#ffffff"/><stop offset="1" stop-color="#ff88c0"/></linearGradient><linearGradient id="inB" x1="1" y1="0" x2="0" y2="1"><stop offset="0" stop-color="#ffe8a0"/><stop offset="0.5" stop-color="#ffffff" stop-opacity="0"/><stop offset="1" stop-color="#a8c0ff"/></linearGradient></defs>
<rect x="1026" y="33" width="165" height="125" fill="url(#inA)"/>
<rect x="1026" y="33" width="165" height="125" fill="url(#inB)" opacity="0.85"/>
<text x="720.80" y="376.20" font-size="10.20" fill="#e0e0e0" text-anchor="end" textLength="5.22" lengthAdjust="spacingAndGlyphs">0</text>
<line x1="721.80" y1="372.60" x2="725.30" y2="372.60" stroke="#bbbbbb" stroke-width="1"/>
<text x="725.30" y="387.50" font-size="10.20" fill="#e0e0e0" text-anchor="middle" textLength="5.22" lengthAdjust="spacingAndGlyphs">0</text>
<line x1="725.30" y1="372.60" x2="725.30" y2="376.10" stroke="#bbbbbb" stroke-width="1"/>
<text x="720.80" y="335.80" font-size="10.20" fill="#e0e0e0" text-anchor="end" textLength="13.05" lengthAdjust="spacingAndGlyphs">0.1</text>
<line x1="721.80" y1="332.20" x2="725.30" y2="332.20" stroke="#bbbbbb" stroke-width="1"/>
<text x="780.76" y="387.50" font-size="10.20" fill="#e0e0e0" text-anchor="middle" textLength="13.05" lengthAdjust="spacingAndGlyphs">0.1</text>
<line x1="780.76" y1="372.60" x2="780.76" y2="376.10" stroke="#bbbbbb" stroke-width="1"/>
<text x="720.80" y="295.40" font-size="10.20" fill="#e0e0e0" text-anchor="end" textLength="13.05" lengthAdjust="spacingAndGlyphs">0.2</text>
<line x1="721.80" y1="291.80" x2="725.30" y2="291.80" stroke="#bbbbbb" stroke-width="1"/>
<text x="836.22" y="387.50" font-size="10.20" fill="#e0e0e0" text-anchor="middle" textLength="13.05" lengthAdjust="spacingAndGlyphs">0.2</text>
<line x1="836.22" y1="372.60" x2="836.22" y2="376.10" stroke="#bbbbbb" stroke-width="1"/>
<text x="720.80" y="255.00" font-size="10.20" fill="#e0e0e0" text-anchor="end" textLength="13.05" lengthAdjust="spacingAndGlyphs">0.3</text>
<line x1="721.80" y1="251.40" x2="725.30" y2="251.40" stroke="#bbbbbb" stroke-width="1"/>
<text x="891.68" y="387.50" font-size="10.20" fill="#e0e0e0" text-anchor="middle" textLength="13.05" lengthAdjust="spacingAndGlyphs">0.3</text>
<line x1="891.68" y1="372.60" x2="891.68" y2="376.10" stroke="#bbbbbb" stroke-width="1"/>
<text x="720.80" y="214.60" font-size="10.20" fill="#e0e0e0" text-anchor="end" textLength="13.05" lengthAdjust="spacingAndGlyphs">0.4</text>
<line x1="721.80" y1="211.00" x2="725.30" y2="211.00" stroke="#bbbbbb" stroke-width="1"/>
<text x="947.14" y="387.50" font-size="10.20" fill="#e0e0e0" text-anchor="middle" textLength="13.05" lengthAdjust="spacingAndGlyphs">0.4</text>
<line x1="947.14" y1="372.60" x2="947.14" y2="376.10" stroke="#bbbbbb" stroke-width="1"/>
<text x="720.80" y="174.20" font-size="10.20" fill="#e0e0e0" text-anchor="end" textLength="13.05" lengthAdjust="spacingAndGlyphs">0.5</text>
<line x1="721.80" y1="170.60" x2="725.30" y2="170.60" stroke="#bbbbbb" stroke-width="1"/>
<text x="1002.60" y="387.50" font-size="10.20" fill="#e0e0e0" text-anchor="middle" textLength="13.05" lengthAdjust="spacingAndGlyphs">0.5</text>
<line x1="1002.60" y1="372.60" x2="1002.60" y2="376.10" stroke="#bbbbbb" stroke-width="1"/>
<text x="720.80" y="133.80" font-size="10.20" fill="#e0e0e0" text-anchor="end" textLength="13.05" lengthAdjust="spacingAndGlyphs">0.6</text>
<line x1="721.80" y1="130.20" x2="725.30" y2="130.20" stroke="#bbbbbb" stroke-width="1"/>
<text x="1058.06" y="387.50" font-size="10.20" fill="#e0e0e0" text-anchor="middle" textLength="13.05" lengthAdjust="spacingAndGlyphs">0.6</text>
<line x1="1058.06" y1="372.60" x2="1058.06" y2="376.10" stroke="#bbbbbb" stroke-width="1"/>
<text x="720.80" y="93.40" font-size="10.20" fill="#e0e0e0" text-anchor="end" textLength="13.05" lengthAdjust="spacingAndGlyphs">0.7</text>
<line x1="721.80" y1="89.80" x2="725.30" y2="89.80" stroke="#bbbbbb" stroke-width="1"/>
<text x="1113.52" y="387.50" font-size="10.20" fill="#e0e0e0" text-anchor="middle" textLength="13.05" lengthAdjust="spacingAndGlyphs">0.7</text>
<line x1="1113.52" y1="372.60" x2="1113.52" y2="376.10" stroke="#bbbbbb" stroke-width="1"/>
<text x="720.80" y="53.00" font-size="10.20" fill="#e0e0e0" text-anchor="end" textLength="13.05" lengthAdjust="spacingAndGlyphs">0.8</text>
<line x1="721.80" y1="49.40" x2="725.30" y2="49.40" stroke="#bbbbbb" stroke-width="1"/>
<text x="1168.98" y="387.50" font-size="10.20" fill="#e0e0e0" text-anchor="middle" textLength="13.05" lengthAdjust="spacingAndGlyphs">0.8</text>
<line x1="1168.98" y1="372.60" x2="1168.98" y2="376.10" stroke="#bbbbbb" stroke-width="1"/>
<line x1="725.30" y1="32.30" x2="725.30" y2="372.60" stroke="#9a9a9a" stroke-width="1.2"/>
<line x1="725.30" y1="372.60" x2="1192.50" y2="372.60" stroke="#9a9a9a" stroke-width="1.2"/>
<line x1="725.30" y1="32.30" x2="1192.50" y2="32.30" stroke="#7a7a7a" stroke-width="1"/>
<line x1="1192.50" y1="32.30" x2="1192.50" y2="372.60" stroke="#7a7a7a" stroke-width="1"/>
<rect x="700.00" y="395.60" width="481.00" height="27.40" fill="#272727"/>
<rect x="700.00" y="417.50" width="481.00" height="5.50" fill="#141414"/>
<text x="771.80" y="415.50" font-size="15.50" fill="#f0f0f0" text-anchor="start" textLength="29.52" lengthAdjust="spacingAndGlyphs">White</text>
<text x="832.40" y="415.50" font-size="15.50" fill="#f0f0f0" text-anchor="start" textLength="21.18" lengthAdjust="spacingAndGlyphs">Red</text>
<text x="887.00" y="415.50" font-size="15.50" fill="#f0f0f0" text-anchor="start" textLength="32.09" lengthAdjust="spacingAndGlyphs">Green</text>
<text x="941.00" y="415.50" font-size="15.50" fill="#f0f0f0" text-anchor="start" textLength="23.11" lengthAdjust="spacingAndGlyphs">Blue</text>
<text x="1002.00" y="415.50" font-size="15.50" fill="#f0f0f0" text-anchor="start" textLength="26.96" lengthAdjust="spacingAndGlyphs">Cyan</text>
<text x="1064.40" y="415.50" font-size="15.50" fill="#f0f0f0" text-anchor="start" textLength="44.94" lengthAdjust="spacingAndGlyphs">Magenta</text>
<text x="1125.50" y="415.50" font-size="15.50" fill="#f0f0f0" text-anchor="start" textLength="32.96" lengthAdjust="spacingAndGlyphs">Yellow</text>
<rect x="711.00" y="423.00" width="470.00" height="22.90" fill="#3f3f3f"/>
<text x="713.50" y="439.80" font-size="16.90" fill="#f0f0f0" text-anchor="start" textLength="8.40" lengthAdjust="spacingAndGlyphs">X</text>
<text x="771.80" y="439.80" font-size="16.90" fill="#f0f0f0" text-anchor="start" textLength="52.51" lengthAdjust="spacingAndGlyphs">108.6665</text>
<text x="832.40" y="439.80" font-size="16.90" fill="#f0f0f0" text-anchor="start" textLength="45.51" lengthAdjust="spacingAndGlyphs">48.3387</text>
<text x="887.00" y="439.80" font-size="16.90" fill="#f0f0f0" text-anchor="start" textLength="45.51" lengthAdjust="spacingAndGlyphs">40.4675</text>
<text x="941.00" y="439.80" font-size="16.90" fill="#f0f0f0" text-anchor="start" textLength="45.51" lengthAdjust="spacingAndGlyphs">21.9197</text>
<text x="1002.00" y="439.80" font-size="16.90" fill="#f0f0f0" text-anchor="start" textLength="45.51" lengthAdjust="spacingAndGlyphs">63.8140</text>
<text x="1064.40" y="439.80" font-size="16.90" fill="#f0f0f0" text-anchor="start" textLength="45.51" lengthAdjust="spacingAndGlyphs">67.2885</text>
<text x="1125.50" y="439.80" font-size="16.90" fill="#f0f0f0" text-anchor="start" textLength="45.51" lengthAdjust="spacingAndGlyphs">84.5847</text>
<rect x="711.00" y="445.90" width="470.00" height="22.90" fill="#6a6a6a"/>
<text x="713.50" y="462.70" font-size="16.90" fill="#f0f0f0" text-anchor="start" textLength="43.14" lengthAdjust="spacingAndGlyphs">Y cd/m²</text>
<text x="771.80" y="462.70" font-size="16.90" fill="#f0f0f0" text-anchor="start" textLength="51.58" lengthAdjust="spacingAndGlyphs">115.6561</text>
<text x="832.40" y="462.70" font-size="16.90" fill="#f0f0f0" text-anchor="start" textLength="45.51" lengthAdjust="spacingAndGlyphs">24.8881</text>
<text x="887.00" y="462.70" font-size="16.90" fill="#f0f0f0" text-anchor="start" textLength="45.51" lengthAdjust="spacingAndGlyphs">83.2239</text>
<text x="941.00" y="462.70" font-size="16.90" fill="#f0f0f0" text-anchor="start" textLength="38.51" lengthAdjust="spacingAndGlyphs">9.1761</text>
<text x="1002.00" y="462.70" font-size="16.90" fill="#f0f0f0" text-anchor="start" textLength="45.51" lengthAdjust="spacingAndGlyphs">92.6139</text>
<text x="1064.40" y="462.70" font-size="16.90" fill="#f0f0f0" text-anchor="start" textLength="45.51" lengthAdjust="spacingAndGlyphs">31.4244</text>
<text x="1125.50" y="462.70" font-size="16.90" fill="#f0f0f0" text-anchor="start" textLength="51.58" lengthAdjust="spacingAndGlyphs">106.1172</text>
<rect x="711.00" y="468.80" width="470.00" height="22.90" fill="#3f3f3f"/>
<text x="713.50" y="485.60" font-size="16.90" fill="#f0f0f0" text-anchor="start" textLength="7.69" lengthAdjust="spacingAndGlyphs">Z</text>
<text x="771.80" y="485.60" font-size="16.90" fill="#f0f0f0" text-anchor="start" textLength="52.51" lengthAdjust="spacingAndGlyphs">126.2291</text>
<text x="832.40" y="485.60" font-size="16.90" fill="#f0f0f0" text-anchor="start" textLength="38.51" lengthAdjust="spacingAndGlyphs">0.6906</text>
<text x="887.00" y="485.60" font-size="16.90" fill="#f0f0f0" text-anchor="start" textLength="38.51" lengthAdjust="spacingAndGlyphs">9.7589</text>
<text x="941.00" y="485.60" font-size="16.90" fill="#f0f0f0" text-anchor="start" textLength="50.65" lengthAdjust="spacingAndGlyphs">111.5900</text>
<text x="1002.00" y="485.60" font-size="16.90" fill="#f0f0f0" text-anchor="start" textLength="52.51" lengthAdjust="spacingAndGlyphs">124.0906</text>
<text x="1064.40" y="485.60" font-size="16.90" fill="#f0f0f0" text-anchor="start" textLength="51.58" lengthAdjust="spacingAndGlyphs">116.1452</text>
<text x="1125.50" y="485.60" font-size="16.90" fill="#f0f0f0" text-anchor="start" textLength="45.51" lengthAdjust="spacingAndGlyphs">10.8677</text>
<rect x="711.00" y="491.70" width="470.00" height="22.90" fill="#6a6a6a"/>
<text x="713.50" y="508.50" font-size="16.90" fill="#f0f0f0" text-anchor="start" textLength="48.28" lengthAdjust="spacingAndGlyphs">x: CIE31</text>
<text x="771.80" y="508.50" font-size="16.90" fill="#f0f0f0" text-anchor="start" textLength="38.51" lengthAdjust="spacingAndGlyphs">0.3100</text>
<text x="832.40" y="508.50" font-size="16.90" fill="#f0f0f0" text-anchor="start" textLength="38.51" lengthAdjust="spacingAndGlyphs">0.6540</text>
<text x="887.00" y="508.50" font-size="16.90" fill="#f0f0f0" text-anchor="start" textLength="38.51" lengthAdjust="spacingAndGlyphs">0.3032</text>
<text x="941.00" y="508.50" font-size="16.90" fill="#f0f0f0" text-anchor="start" textLength="38.51" lengthAdjust="spacingAndGlyphs">0.1536</text>
<text x="1002.00" y="508.50" font-size="16.90" fill="#f0f0f0" text-anchor="start" textLength="38.51" lengthAdjust="spacingAndGlyphs">0.3275</text>
<text x="1064.40" y="508.50" font-size="16.90" fill="#f0f0f0" text-anchor="start" textLength="38.51" lengthAdjust="spacingAndGlyphs">0.3132</text>
<text x="1125.50" y="508.50" font-size="16.90" fill="#f0f0f0" text-anchor="start" textLength="38.51" lengthAdjust="spacingAndGlyphs">0.4196</text>
<rect x="711.00" y="514.60" width="470.00" height="22.90" fill="#3f3f3f"/>
<text x="713.50" y="531.40" font-size="16.90" fill="#f0f0f0" text-anchor="start" textLength="48.28" lengthAdjust="spacingAndGlyphs">y: CIE31</text>
<text x="771.80" y="531.40" font-size="16.90" fill="#f0f0f0" text-anchor="start" textLength="38.51" lengthAdjust="spacingAndGlyphs">0.3299</text>
<text x="832.40" y="531.40" font-size="16.90" fill="#f0f0f0" text-anchor="start" textLength="38.51" lengthAdjust="spacingAndGlyphs">0.3367</text>
<text x="887.00" y="531.40" font-size="16.90" fill="#f0f0f0" text-anchor="start" textLength="38.51" lengthAdjust="spacingAndGlyphs">0.6236</text>
<text x="941.00" y="531.40" font-size="16.90" fill="#f0f0f0" text-anchor="start" textLength="38.51" lengthAdjust="spacingAndGlyphs">0.0643</text>
<text x="1002.00" y="531.40" font-size="16.90" fill="#f0f0f0" text-anchor="start" textLength="38.51" lengthAdjust="spacingAndGlyphs">0.3302</text>
<text x="1064.40" y="531.40" font-size="16.90" fill="#f0f0f0" text-anchor="start" textLength="38.51" lengthAdjust="spacingAndGlyphs">0.1463</text>
<text x="1125.50" y="531.40" font-size="16.90" fill="#f0f0f0" text-anchor="start" textLength="38.51" lengthAdjust="spacingAndGlyphs">0.5265</text>
<rect x="700.00" y="395.60" width="11.00" height="27.40" fill="#070707"/>
<rect x="700.00" y="423.00" width="11.00" height="119.00" fill="#2a2a2a"/>
<line x1="705.50" y1="423.00" x2="705.50" y2="537.00" stroke="#262626" stroke-width="1"/>
<rect x="700.00" y="537.50" width="499.00" height="4.50" fill="#3a3a3a"/>
<rect x="1180.50" y="395.60" width="18.50" height="146.40" fill="#363636"/>
<rect x="1182.5" y="424" width="13" height="113" rx="3" fill="#3a3a3a" stroke="#505050" stroke-width="1"/>
<defs><linearGradient id="sbt" x1="0" y1="0" x2="1" y2="0"><stop offset="0" stop-color="#8a8a8a"/><stop offset="1" stop-color="#5a5a5a"/></linearGradient></defs>
<rect x="1183.5" y="425.5" width="11" height="15" rx="2.5" fill="url(#sbt)"/>
<rect x="1183.5" y="441" width="11" height="36" rx="2" fill="#4c4c4c"/>
<path d="M1186 437 L1189 431 L1192 437 Z" fill="#2a2a2a"/>
<rect x="1183.5" y="519.5" width="11" height="15" rx="2.5" fill="url(#sbt)"/>
<path d="M1186 524 L1189 530 L1192 524 Z" fill="#2a2a2a"/>
<rect x="711.00" y="537.50" width="11.00" height="4.50" fill="#7a7a7a"/>
<path d="M1011 499 L1034 499 L1034 521 L1011 521 Z" fill="#f27a1a"/>
<path d="M1027 502 C1019 501 1015 505 1019 510 C1023 515 1022 519 1015 519" fill="none" stroke="#fbe0c8" stroke-width="2.2" opacity="0.9"/>
<text x="1040.5" y="519.3" font-size="28.8" fill="#262626" fill-opacity="0.72" stroke="#c8c8c8" stroke-opacity="0.3" stroke-width="0.8" textLength="137" lengthAdjust="spacingAndGlyphs">Soomal.com</text>
</svg>
<canvas id="cie" width="468" height="342"></canvas>
<canvas id="ins" width="165" height="125"></canvas>
<svg width="1199" height="542" viewBox="0 0 1199 542" style="pointer-events:none">
<rect x="886.88" y="124.00" width="9.6" height="9.6" fill="none" stroke="#ffffff" stroke-width="1.25"/>
<circle cx="893.45" cy="119.23" r="2.2" fill="#70e070" stroke="#2a7a2a" stroke-width="0.8"/>
<rect x="1075.44" y="233.49" width="9.6" height="9.6" fill="none" stroke="#ffffff" stroke-width="1.25"/>
<circle cx="1088.01" cy="235.57" r="2.2" fill="none" stroke="#ff8080" stroke-width="0.8"/>
<rect x="803.69" y="342.97" width="9.6" height="9.6" fill="none" stroke="#ffffff" stroke-width="1.25"/>
<circle cx="810.49" cy="346.03" r="2.0" fill="none" stroke="#6060ff" stroke-width="0.8"/>
<rect x="953.04" y="162.40" width="9.6" height="9.6" fill="none" stroke="#f0f0c0" stroke-width="1.25"/>
<circle cx="958.01" cy="158.60" r="3.0" fill="#f8e830" stroke="#2a2a10" stroke-width="1.2"/>
<rect x="845.06" y="234.01" width="9.6" height="9.6" fill="none" stroke="#ffffff" stroke-width="1.25"/>
<circle cx="851.47" cy="238.20" r="2.6" fill="none" stroke="#303030" stroke-width="1"/>
<rect x="898.47" y="304.77" width="9.6" height="9.6" fill="none" stroke="#ffffff" stroke-width="1.25"/>
<circle cx="899.00" cy="312.78" r="2.2" fill="none" stroke="#a050a0" stroke-width="0.8"/>
<rect x="893.92" y="233.89" width="9.6" height="9.6" fill="none" stroke="#111111" stroke-width="1.35"/>
<circle cx="897.23" cy="238.33" r="2.6" fill="none" stroke="#111111" stroke-width="1"/>
<defs><linearGradient id="inA" x1="0" y1="0" x2="1" y2="1"><stop offset="0" stop-color="#90f0b8"/><stop offset="0.5" stop-color="#ffffff"/><stop offset="1" stop-color="#ff8cb8"/></linearGradient><linearGradient id="inB" x1="1" y1="0" x2="0" y2="1"><stop offset="0" stop-color="#ffe8a8"/><stop offset="0.5" stop-color="#ffffff" stop-opacity="0"/><stop offset="1" stop-color="#b8c8ff"/></linearGradient></defs>
<rect x="1025.5" y="32.8" width="165.5" height="125.5" fill="none" stroke="#9a9aa8" stroke-width="1.2"/>
<circle cx="1097.4" cy="93.3" r="2.6" fill="none" stroke="#222" stroke-width="1"/>
<rect x="1103.2" y="89.8" width="10" height="10" fill="#ffffff" stroke="#111" stroke-width="1.6"/>
</svg>
<script>
(function(){
var cv=document.getElementById('cie');var ctx=cv.getContext('2d');
var W=cv.width,H=cv.height,OX=725,OY=32,X0=725.3,Y0=371.4,SX=554.6,SY=405.5;
var L=[[0.1741,0.0050],[0.1738,0.0049],[0.1733,0.0048],[0.1726,0.0048],[0.1714,0.0051],[0.1689,0.0069],[0.1644,0.0109],[0.1566,0.0177],[0.1440,0.0297],[0.1241,0.0578],[0.1096,0.0868],[0.0913,0.1327],[0.0687,0.2007],[0.0454,0.2950],[0.0235,0.4127],[0.0082,0.5384],[0.0039,0.6548],[0.0139,0.7502],[0.0389,0.8120],[0.0743,0.8338],[0.1142,0.8262],[0.1547,0.8059],[0.1929,0.7816],[0.2296,0.7543],[0.2658,0.7243],[0.3016,0.6923],[0.3373,0.6589],[0.3731,0.6245],[0.4087,0.5896],[0.4441,0.5547],[0.4788,0.5202],[0.5125,0.4866],[0.5448,0.4544],[0.5752,0.4242],[0.6029,0.3965],[0.6270,0.3725],[0.6482,0.3514],[0.6658,0.3340],[0.6801,0.3197],[0.6915,0.3083],[0.7006,0.2993],[0.7079,0.2920],[0.7140,0.2859],[0.7190,0.2809],[0.7230,0.2770],[0.7260,0.2740],[0.7283,0.2717],[0.7300,0.2700],[0.7311,0.2689],[0.7320,0.2680],[0.7334,0.2666],[0.7347,0.2653]];
var img=ctx.createImageData(W,H);var d=img.data;
var R=[0.64,0.33],G=[0.30,0.60],B=[0.15,0.06];
function side(ax,ay,bx,by,px,py){return (bx-ax)*(py-ay)-(by-ay)*(px-ax);}
var OUT=0.6, GAM=1.0;
for(var j=0;j<H;j++){for(var i=0;i<W;i++){
 var x=(OX+i+0.5-X0)/SX, y=(Y0-(OY+j+0.5))/SY; if(y<0.001)y=0.001;
 var Xc=x/y, Yc=1, Zc=(1-x-y)/y;
 var r=3.2406*Xc-1.5372*Yc-0.4986*Zc, g=-0.9689*Xc+1.8758*Yc+0.0415*Zc, b=0.0557*Xc-0.2040*Yc+1.0570*Zc;
 var inside = r>=0 && g>=0 && b>=0;
 if(r<0)r=0; if(g<0)g=0; if(b<0)b=0;
 var m=Math.max(r,g,b); if(m<=0)m=1; r/=m; g/=m; b/=m;
 r=Math.pow(r,GAM); g=Math.pow(g,GAM); b=Math.pow(b,GAM);
 var lum=0.2126*r+0.7152*g+0.0722*b; var k=inside?1:(1-0.45*Math.pow(lum,0.42));
 var o=(j*W+i)*4; d[o]=r*255*k; d[o+1]=g*255*k; d[o+2]=b*255*k; d[o+3]=255;
}}
var off=document.createElement('canvas');off.width=W;off.height=H;off.getContext('2d').putImageData(img,0,0);
ctx.save();ctx.beginPath();
var P=[];for(var n=0;n<L.length;n++){P.push([X0+SX*L[n][0]-OX, Y0-SY*L[n][1]-OY]);}
ctx.moveTo(P[0][0],P[0][1]);
for(var n=0;n<P.length-1;n++){var p0=P[n>0?n-1:0],p1=P[n],p2=P[n+1],p3=P[n+2<P.length?n+2:n+1];
 ctx.bezierCurveTo(p1[0]+(p2[0]-p0[0])/6,p1[1]+(p2[1]-p0[1])/6,p2[0]-(p3[0]-p1[0])/6,p2[1]-(p3[1]-p1[1])/6,p2[0],p2[1]);}
ctx.closePath();ctx.save();ctx.clip();ctx.drawImage(off,0,0);ctx.restore();ctx.lineWidth=1.4;ctx.strokeStyle='rgba(8,8,8,0.7)';ctx.stroke();ctx.restore();

var iv=document.getElementById('ins');var ic=iv.getContext('2d');var IW=iv.width,IH=iv.height;
var im=ic.createImageData(IW,IH);var q=im.data;
for(var j=0;j<IH;j++){for(var i=0;i<IW;i++){
 var x=0.3127+(i+0.5-IW/2)/(IW/2)*0.05, y=0.329-(j+0.5-IH/2)/(IH/2)*0.05;
 var Xc=x/y, Zc=(1-x-y)/y;
 var r=3.2406*Xc-1.5372-0.4986*Zc, g=-0.9689*Xc+1.8758+0.0415*Zc, b=0.0557*Xc-0.2040+1.0570*Zc;
 if(r<0)r=0; if(g<0)g=0; if(b<0)b=0;
 var m=Math.max(r,g,b); r/=m; g/=m; b/=m;
 r=Math.pow(r,0.55); g=Math.pow(g,0.55); b=Math.pow(b,0.55);
 var o=(j*IW+i)*4; q[o]=r*255; q[o+1]=g*255; q[o+2]=b*255; q[o+3]=255;
}}
ic.putImageData(im,0,0);
})();

</script>
</body></html>
